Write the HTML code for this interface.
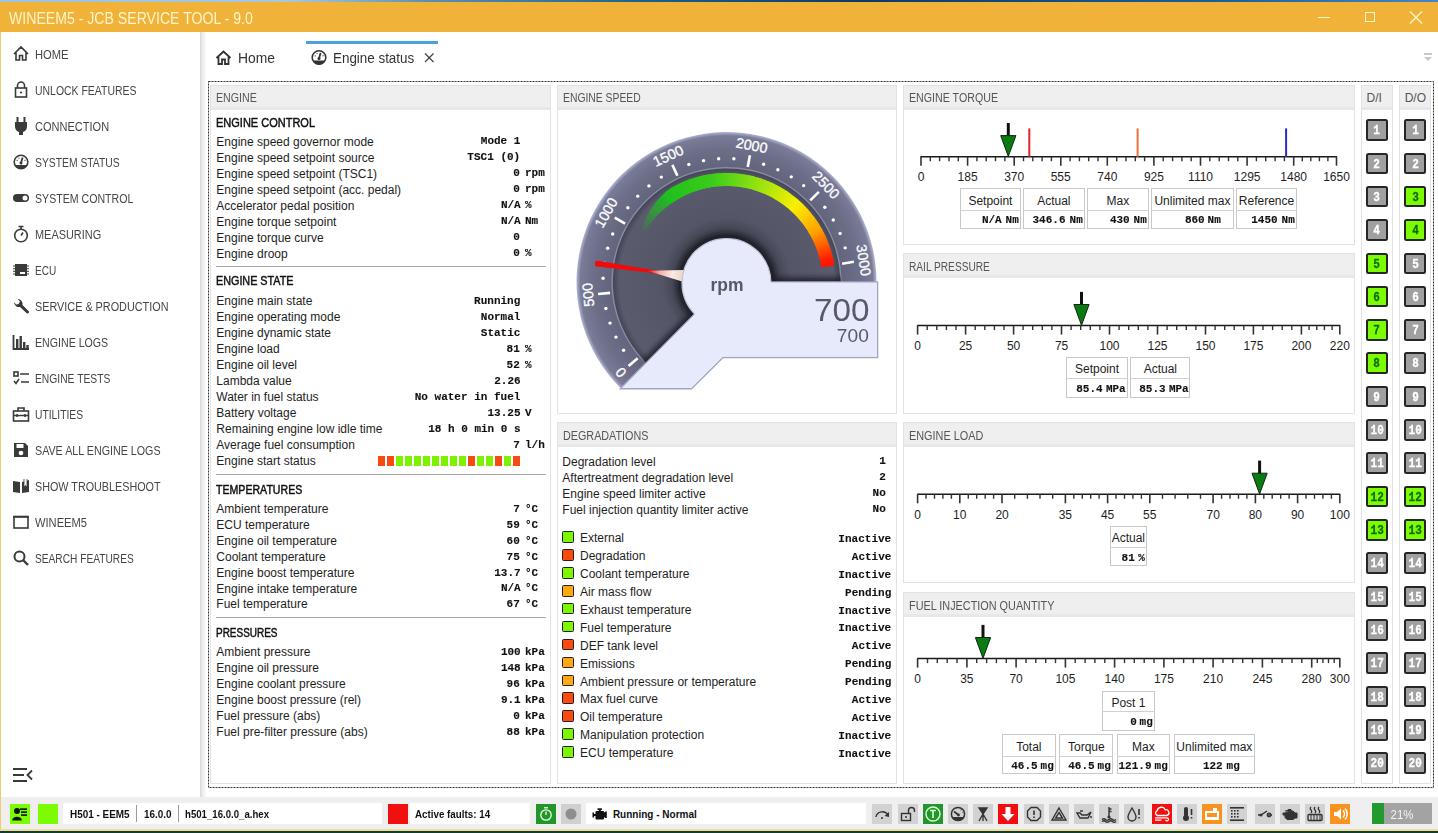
<!DOCTYPE html>
<html><head><meta charset="utf-8"><title>WINEEM5 - JCB SERVICE TOOL - 9.0</title>
<style>
html,body{margin:0;padding:0;}
body{width:1438px;height:833px;overflow:hidden;position:relative;background:#fff;font-family:"Liberation Sans",sans-serif;}
.r{position:absolute;}
.t,.m{position:absolute;white-space:pre;line-height:1;}
.t{font-family:"Liberation Sans",sans-serif;}
.m{font-family:"Liberation Mono",monospace;-webkit-text-stroke:0.12px currentColor;}
svg.ov{position:absolute;left:0;top:0;width:1438px;height:833px;}
</style></head><body>
<div class="r" style="left:0px;top:0px;width:1438px;height:2px;background:linear-gradient(90deg,#9cc3e0 0%,#a8c8dc 20%,#5b8fae 30%,#1f5f86 45%,#0d3b66 60%,#1d5f9a 85%,#4a84c6 100%)"></div>
<div class="r" style="left:0px;top:2px;width:1438px;height:30px;background:#f1b239"></div>
<div class="r" style="left:1318px;top:17px;width:12px;height:1px;background:#fff6d0"></div>
<div class="r" style="left:1365px;top:12px;width:10px;height:10px;border:1px solid #fff6d0;box-sizing:border-box"></div>
<div class="r" style="left:1px;top:32px;width:199px;height:765px;background:#fff"></div>
<div class="r" style="left:200px;top:32px;width:6px;height:765px;background:linear-gradient(90deg,#d6d6d6,#ececec 40%,#fafafa)"></div>
<div class="r" style="left:206px;top:32px;width:1232px;height:765px;background:#fff"></div>
<div class="r" style="left:306px;top:41px;width:132px;height:3px;background:#4aa3d8"></div>
<div class="r" style="left:1424px;top:53px;width:8px;height:2px;background:#c8c8c8"></div>
<div class="r" style="left:210px;top:85px;width:341px;height:699px;border:1px solid #e2e2e2;box-sizing:border-box;background:#fff"></div>
<div class="r" style="left:211px;top:86px;width:339px;height:24px;background:#efefef;border-bottom:3px solid #e8e8e8;box-sizing:border-box"></div>
<div class="r" style="left:557px;top:85px;width:340px;height:329px;border:1px solid #e2e2e2;box-sizing:border-box;background:#fff"></div>
<div class="r" style="left:558px;top:86px;width:338px;height:24px;background:#efefef;border-bottom:3px solid #e8e8e8;box-sizing:border-box"></div>
<div class="r" style="left:557px;top:422px;width:340px;height:362px;border:1px solid #e2e2e2;box-sizing:border-box;background:#fff"></div>
<div class="r" style="left:558px;top:423px;width:338px;height:24px;background:#efefef;border-bottom:3px solid #e8e8e8;box-sizing:border-box"></div>
<div class="r" style="left:903px;top:85px;width:452px;height:160px;border:1px solid #e2e2e2;box-sizing:border-box;background:#fff"></div>
<div class="r" style="left:904px;top:86px;width:450px;height:24px;background:#efefef;border-bottom:3px solid #e8e8e8;box-sizing:border-box"></div>
<div class="r" style="left:903px;top:253px;width:452px;height:161px;border:1px solid #e2e2e2;box-sizing:border-box;background:#fff"></div>
<div class="r" style="left:904px;top:254px;width:450px;height:24px;background:#efefef;border-bottom:3px solid #e8e8e8;box-sizing:border-box"></div>
<div class="r" style="left:903px;top:422px;width:452px;height:161px;border:1px solid #e2e2e2;box-sizing:border-box;background:#fff"></div>
<div class="r" style="left:904px;top:423px;width:450px;height:24px;background:#efefef;border-bottom:3px solid #e8e8e8;box-sizing:border-box"></div>
<div class="r" style="left:903px;top:592px;width:452px;height:192px;border:1px solid #e2e2e2;box-sizing:border-box;background:#fff"></div>
<div class="r" style="left:904px;top:593px;width:450px;height:24px;background:#efefef;border-bottom:3px solid #e8e8e8;box-sizing:border-box"></div>
<div class="r" style="left:1361px;top:85px;width:32px;height:699px;border:1px solid #e2e2e2;box-sizing:border-box;background:#fff"></div>
<div class="r" style="left:1362px;top:86px;width:30px;height:24px;background:#efefef;border-bottom:3px solid #e8e8e8;box-sizing:border-box"></div>
<div class="r" style="left:1399px;top:85px;width:32px;height:699px;border:1px solid #e2e2e2;box-sizing:border-box;background:#fff"></div>
<div class="r" style="left:1400px;top:86px;width:30px;height:24px;background:#efefef;border-bottom:3px solid #e8e8e8;box-sizing:border-box"></div>
<div class="r" style="left:216px;top:266px;width:330px;height:1px;background:#a8a8a8"></div>
<div class="r" style="left:378px;top:456px;width:7px;height:10px;background:#f54a12"></div>
<div class="r" style="left:387px;top:456px;width:7px;height:10px;background:#f54a12"></div>
<div class="r" style="left:396px;top:456px;width:7px;height:10px;background:#7cf200"></div>
<div class="r" style="left:405px;top:456px;width:7px;height:10px;background:#7cf200"></div>
<div class="r" style="left:414px;top:456px;width:7px;height:10px;background:#7cf200"></div>
<div class="r" style="left:423px;top:456px;width:7px;height:10px;background:#7cf200"></div>
<div class="r" style="left:432px;top:456px;width:7px;height:10px;background:#7cf200"></div>
<div class="r" style="left:441px;top:456px;width:7px;height:10px;background:#7cf200"></div>
<div class="r" style="left:450px;top:456px;width:7px;height:10px;background:#7cf200"></div>
<div class="r" style="left:459px;top:456px;width:7px;height:10px;background:#7cf200"></div>
<div class="r" style="left:468px;top:456px;width:7px;height:10px;background:#f54a12"></div>
<div class="r" style="left:477px;top:456px;width:7px;height:10px;background:#7cf200"></div>
<div class="r" style="left:486px;top:456px;width:7px;height:10px;background:#7cf200"></div>
<div class="r" style="left:495px;top:456px;width:7px;height:10px;background:#f54a12"></div>
<div class="r" style="left:504px;top:456px;width:7px;height:10px;background:#7cf200"></div>
<div class="r" style="left:513px;top:456px;width:7px;height:10px;background:#f54a12"></div>
<div class="r" style="left:216px;top:474px;width:330px;height:1px;background:#a8a8a8"></div>
<div class="r" style="left:216px;top:617px;width:330px;height:1px;background:#a8a8a8"></div>
<div class="r" style="left:562px;top:531.3000000000001px;width:12px;height:11.5px;background:#7cf700;border:1.5px solid #1e1e1e;border-radius:1.5px;box-sizing:border-box"></div>
<div class="r" style="left:562px;top:549.2px;width:12px;height:11.5px;background:#fb4a10;border:1.5px solid #1e1e1e;border-radius:1.5px;box-sizing:border-box"></div>
<div class="r" style="left:562px;top:567.1px;width:12px;height:11.5px;background:#7cf700;border:1.5px solid #1e1e1e;border-radius:1.5px;box-sizing:border-box"></div>
<div class="r" style="left:562px;top:585.0000000000001px;width:12px;height:11.5px;background:#ffa812;border:1.5px solid #1e1e1e;border-radius:1.5px;box-sizing:border-box"></div>
<div class="r" style="left:562px;top:602.9000000000001px;width:12px;height:11.5px;background:#7cf700;border:1.5px solid #1e1e1e;border-radius:1.5px;box-sizing:border-box"></div>
<div class="r" style="left:562px;top:620.8000000000001px;width:12px;height:11.5px;background:#7cf700;border:1.5px solid #1e1e1e;border-radius:1.5px;box-sizing:border-box"></div>
<div class="r" style="left:562px;top:638.7px;width:12px;height:11.5px;background:#fb4a10;border:1.5px solid #1e1e1e;border-radius:1.5px;box-sizing:border-box"></div>
<div class="r" style="left:562px;top:656.6px;width:12px;height:11.5px;background:#ffa812;border:1.5px solid #1e1e1e;border-radius:1.5px;box-sizing:border-box"></div>
<div class="r" style="left:562px;top:674.5000000000001px;width:12px;height:11.5px;background:#ffa812;border:1.5px solid #1e1e1e;border-radius:1.5px;box-sizing:border-box"></div>
<div class="r" style="left:562px;top:692.4000000000001px;width:12px;height:11.5px;background:#fb4a10;border:1.5px solid #1e1e1e;border-radius:1.5px;box-sizing:border-box"></div>
<div class="r" style="left:562px;top:710.3000000000001px;width:12px;height:11.5px;background:#fb4a10;border:1.5px solid #1e1e1e;border-radius:1.5px;box-sizing:border-box"></div>
<div class="r" style="left:562px;top:728.2px;width:12px;height:11.5px;background:#7cf700;border:1.5px solid #1e1e1e;border-radius:1.5px;box-sizing:border-box"></div>
<div class="r" style="left:562px;top:746.1px;width:12px;height:11.5px;background:#7cf700;border:1.5px solid #1e1e1e;border-radius:1.5px;box-sizing:border-box"></div>
<div class="r" style="left:960.2px;top:188.4px;width:60.39999999999998px;height:40.29999999999998px;border:1px solid #c9c9c9;box-sizing:border-box;background:#fff"></div>
<div class="r" style="left:960.2px;top:209.5px;width:60.39999999999998px;height:1px;background:#d0d0d0"></div>
<div class="r" style="left:1023.2px;top:188.4px;width:61.399999999999864px;height:40.29999999999998px;border:1px solid #c9c9c9;box-sizing:border-box;background:#fff"></div>
<div class="r" style="left:1023.2px;top:209.5px;width:61.399999999999864px;height:1px;background:#d0d0d0"></div>
<div class="r" style="left:1087.1px;top:188.4px;width:61.5px;height:40.29999999999998px;border:1px solid #c9c9c9;box-sizing:border-box;background:#fff"></div>
<div class="r" style="left:1087.1px;top:209.5px;width:61.5px;height:1px;background:#d0d0d0"></div>
<div class="r" style="left:1151.1px;top:188.4px;width:82.60000000000014px;height:40.29999999999998px;border:1px solid #c9c9c9;box-sizing:border-box;background:#fff"></div>
<div class="r" style="left:1151.1px;top:209.5px;width:82.60000000000014px;height:1px;background:#d0d0d0"></div>
<div class="r" style="left:1236.2px;top:188.4px;width:60.5px;height:40.29999999999998px;border:1px solid #c9c9c9;box-sizing:border-box;background:#fff"></div>
<div class="r" style="left:1236.2px;top:209.5px;width:60.5px;height:1px;background:#d0d0d0"></div>
<div class="r" style="left:1066.3px;top:357px;width:61.5px;height:40.60000000000002px;border:1px solid #c9c9c9;box-sizing:border-box;background:#fff"></div>
<div class="r" style="left:1066.3px;top:378px;width:61.5px;height:1px;background:#d0d0d0"></div>
<div class="r" style="left:1130.3px;top:357px;width:60.200000000000045px;height:40.60000000000002px;border:1px solid #c9c9c9;box-sizing:border-box;background:#fff"></div>
<div class="r" style="left:1130.3px;top:378px;width:60.200000000000045px;height:1px;background:#d0d0d0"></div>
<div class="r" style="left:1109.5px;top:526.3px;width:37.799999999999955px;height:40.0px;border:1px solid #c9c9c9;box-sizing:border-box;background:#fff"></div>
<div class="r" style="left:1109.5px;top:547px;width:37.799999999999955px;height:1px;background:#d0d0d0"></div>
<div class="r" style="left:1101.5px;top:690.6px;width:53.799999999999955px;height:40.0px;border:1px solid #c9c9c9;box-sizing:border-box;background:#fff"></div>
<div class="r" style="left:1101.5px;top:711.4px;width:53.799999999999955px;height:1px;background:#d0d0d0"></div>
<div class="r" style="left:1001.7px;top:734.4px;width:54.399999999999864px;height:40.0px;border:1px solid #c9c9c9;box-sizing:border-box;background:#fff"></div>
<div class="r" style="left:1001.7px;top:755.5px;width:54.399999999999864px;height:1px;background:#d0d0d0"></div>
<div class="r" style="left:1059.3px;top:734.4px;width:54.100000000000136px;height:40.0px;border:1px solid #c9c9c9;box-sizing:border-box;background:#fff"></div>
<div class="r" style="left:1059.3px;top:755.5px;width:54.100000000000136px;height:1px;background:#d0d0d0"></div>
<div class="r" style="left:1116.6px;top:734.4px;width:53.700000000000045px;height:40.0px;border:1px solid #c9c9c9;box-sizing:border-box;background:#fff"></div>
<div class="r" style="left:1116.6px;top:755.5px;width:53.700000000000045px;height:1px;background:#d0d0d0"></div>
<div class="r" style="left:1173.5px;top:734.4px;width:81.59999999999991px;height:40.0px;border:1px solid #c9c9c9;box-sizing:border-box;background:#fff"></div>
<div class="r" style="left:1173.5px;top:755.5px;width:81.59999999999991px;height:1px;background:#d0d0d0"></div>
<div class="r" style="left:1366px;top:119.2px;width:22px;height:21.6px;background:#a0a0a0;border:2px solid #262626;border-radius:2.5px;box-sizing:border-box"></div>
<div class="r" style="left:1366px;top:152.5px;width:22px;height:21.6px;background:#a0a0a0;border:2px solid #262626;border-radius:2.5px;box-sizing:border-box"></div>
<div class="r" style="left:1366px;top:185.8px;width:22px;height:21.6px;background:#a0a0a0;border:2px solid #262626;border-radius:2.5px;box-sizing:border-box"></div>
<div class="r" style="left:1366px;top:219.2px;width:22px;height:21.6px;background:#a0a0a0;border:2px solid #262626;border-radius:2.5px;box-sizing:border-box"></div>
<div class="r" style="left:1366px;top:252.5px;width:22px;height:21.6px;background:#7cfc00;border:2px solid #262626;border-radius:2.5px;box-sizing:border-box"></div>
<div class="r" style="left:1366px;top:285.8px;width:22px;height:21.6px;background:#7cfc00;border:2px solid #262626;border-radius:2.5px;box-sizing:border-box"></div>
<div class="r" style="left:1366px;top:319.1px;width:22px;height:21.6px;background:#7cfc00;border:2px solid #262626;border-radius:2.5px;box-sizing:border-box"></div>
<div class="r" style="left:1366px;top:352.4px;width:22px;height:21.6px;background:#7cfc00;border:2px solid #262626;border-radius:2.5px;box-sizing:border-box"></div>
<div class="r" style="left:1366px;top:385.8px;width:22px;height:21.6px;background:#a0a0a0;border:2px solid #262626;border-radius:2.5px;box-sizing:border-box"></div>
<div class="r" style="left:1366px;top:419.1px;width:22px;height:21.6px;background:#a0a0a0;border:2px solid #262626;border-radius:2.5px;box-sizing:border-box"></div>
<div class="r" style="left:1366px;top:452.4px;width:22px;height:21.6px;background:#a0a0a0;border:2px solid #262626;border-radius:2.5px;box-sizing:border-box"></div>
<div class="r" style="left:1366px;top:485.7px;width:22px;height:21.6px;background:#7cfc00;border:2px solid #262626;border-radius:2.5px;box-sizing:border-box"></div>
<div class="r" style="left:1366px;top:519.0px;width:22px;height:21.6px;background:#7cfc00;border:2px solid #262626;border-radius:2.5px;box-sizing:border-box"></div>
<div class="r" style="left:1366px;top:552.4px;width:22px;height:21.6px;background:#a0a0a0;border:2px solid #262626;border-radius:2.5px;box-sizing:border-box"></div>
<div class="r" style="left:1366px;top:585.7px;width:22px;height:21.6px;background:#a0a0a0;border:2px solid #262626;border-radius:2.5px;box-sizing:border-box"></div>
<div class="r" style="left:1366px;top:619.0px;width:22px;height:21.6px;background:#a0a0a0;border:2px solid #262626;border-radius:2.5px;box-sizing:border-box"></div>
<div class="r" style="left:1366px;top:652.3px;width:22px;height:21.6px;background:#a0a0a0;border:2px solid #262626;border-radius:2.5px;box-sizing:border-box"></div>
<div class="r" style="left:1366px;top:685.6px;width:22px;height:21.6px;background:#a0a0a0;border:2px solid #262626;border-radius:2.5px;box-sizing:border-box"></div>
<div class="r" style="left:1366px;top:719.0px;width:22px;height:21.6px;background:#a0a0a0;border:2px solid #262626;border-radius:2.5px;box-sizing:border-box"></div>
<div class="r" style="left:1366px;top:752.3px;width:22px;height:21.6px;background:#a0a0a0;border:2px solid #262626;border-radius:2.5px;box-sizing:border-box"></div>
<div class="r" style="left:1404.3px;top:119.2px;width:22px;height:21.6px;background:#a0a0a0;border:2px solid #262626;border-radius:2.5px;box-sizing:border-box"></div>
<div class="r" style="left:1404.3px;top:152.5px;width:22px;height:21.6px;background:#a0a0a0;border:2px solid #262626;border-radius:2.5px;box-sizing:border-box"></div>
<div class="r" style="left:1404.3px;top:185.8px;width:22px;height:21.6px;background:#7cfc00;border:2px solid #262626;border-radius:2.5px;box-sizing:border-box"></div>
<div class="r" style="left:1404.3px;top:219.2px;width:22px;height:21.6px;background:#7cfc00;border:2px solid #262626;border-radius:2.5px;box-sizing:border-box"></div>
<div class="r" style="left:1404.3px;top:252.5px;width:22px;height:21.6px;background:#a0a0a0;border:2px solid #262626;border-radius:2.5px;box-sizing:border-box"></div>
<div class="r" style="left:1404.3px;top:285.8px;width:22px;height:21.6px;background:#a0a0a0;border:2px solid #262626;border-radius:2.5px;box-sizing:border-box"></div>
<div class="r" style="left:1404.3px;top:319.1px;width:22px;height:21.6px;background:#a0a0a0;border:2px solid #262626;border-radius:2.5px;box-sizing:border-box"></div>
<div class="r" style="left:1404.3px;top:352.4px;width:22px;height:21.6px;background:#a0a0a0;border:2px solid #262626;border-radius:2.5px;box-sizing:border-box"></div>
<div class="r" style="left:1404.3px;top:385.8px;width:22px;height:21.6px;background:#a0a0a0;border:2px solid #262626;border-radius:2.5px;box-sizing:border-box"></div>
<div class="r" style="left:1404.3px;top:419.1px;width:22px;height:21.6px;background:#a0a0a0;border:2px solid #262626;border-radius:2.5px;box-sizing:border-box"></div>
<div class="r" style="left:1404.3px;top:452.4px;width:22px;height:21.6px;background:#a0a0a0;border:2px solid #262626;border-radius:2.5px;box-sizing:border-box"></div>
<div class="r" style="left:1404.3px;top:485.7px;width:22px;height:21.6px;background:#7cfc00;border:2px solid #262626;border-radius:2.5px;box-sizing:border-box"></div>
<div class="r" style="left:1404.3px;top:519.0px;width:22px;height:21.6px;background:#7cfc00;border:2px solid #262626;border-radius:2.5px;box-sizing:border-box"></div>
<div class="r" style="left:1404.3px;top:552.4px;width:22px;height:21.6px;background:#a0a0a0;border:2px solid #262626;border-radius:2.5px;box-sizing:border-box"></div>
<div class="r" style="left:1404.3px;top:585.7px;width:22px;height:21.6px;background:#a0a0a0;border:2px solid #262626;border-radius:2.5px;box-sizing:border-box"></div>
<div class="r" style="left:1404.3px;top:619.0px;width:22px;height:21.6px;background:#a0a0a0;border:2px solid #262626;border-radius:2.5px;box-sizing:border-box"></div>
<div class="r" style="left:1404.3px;top:652.3px;width:22px;height:21.6px;background:#a0a0a0;border:2px solid #262626;border-radius:2.5px;box-sizing:border-box"></div>
<div class="r" style="left:1404.3px;top:685.6px;width:22px;height:21.6px;background:#a0a0a0;border:2px solid #262626;border-radius:2.5px;box-sizing:border-box"></div>
<div class="r" style="left:1404.3px;top:719.0px;width:22px;height:21.6px;background:#a0a0a0;border:2px solid #262626;border-radius:2.5px;box-sizing:border-box"></div>
<div class="r" style="left:1404.3px;top:752.3px;width:22px;height:21.6px;background:#a0a0a0;border:2px solid #262626;border-radius:2.5px;box-sizing:border-box"></div>
<div class="r" style="left:1px;top:797px;width:1437px;height:32px;background:#efefef"></div>
<div class="r" style="left:10px;top:804px;width:20px;height:20px;background:#7cfc00"></div>
<div class="r" style="left:38px;top:804px;width:20px;height:20px;background:#7cfc00"></div>
<div class="r" style="left:63px;top:803px;width:319px;height:21px;background:#fff"></div>
<div class="r" style="left:136px;top:805px;width:1px;height:17px;background:#9a9a9a"></div>
<div class="r" style="left:178px;top:805px;width:1px;height:17px;background:#9a9a9a"></div>
<div class="r" style="left:388px;top:804px;width:20px;height:20px;background:#f01010"></div>
<div class="r" style="left:410px;top:803px;width:120px;height:21px;background:#fff"></div>
<div class="r" style="left:536px;top:804px;width:20px;height:20px;background:#22962a"></div>
<div class="r" style="left:561px;top:804px;width:20px;height:20px;background:#d0d0d0"></div>
<div class="r" style="left:586px;top:803px;width:280px;height:21px;background:#fff"></div>
<div class="r" style="left:872px;top:804px;width:20px;height:20px;background:#d2d2d2"></div>
<div class="r" style="left:898px;top:804px;width:20px;height:20px;background:#d2d2d2"></div>
<div class="r" style="left:923px;top:804px;width:20px;height:20px;background:#22962a"></div>
<div class="r" style="left:948px;top:804px;width:20px;height:20px;background:#d2d2d2"></div>
<div class="r" style="left:973px;top:804px;width:20px;height:20px;background:#d2d2d2"></div>
<div class="r" style="left:998px;top:804px;width:20px;height:20px;background:#f20f0f"></div>
<div class="r" style="left:1024px;top:804px;width:20px;height:20px;background:#d2d2d2"></div>
<div class="r" style="left:1049px;top:804px;width:20px;height:20px;background:#d2d2d2"></div>
<div class="r" style="left:1074px;top:804px;width:20px;height:20px;background:#d2d2d2"></div>
<div class="r" style="left:1099px;top:804px;width:20px;height:20px;background:#d2d2d2"></div>
<div class="r" style="left:1124px;top:804px;width:20px;height:20px;background:#d2d2d2"></div>
<div class="r" style="left:1152px;top:804px;width:20px;height:20px;background:#f20f0f"></div>
<div class="r" style="left:1177px;top:804px;width:20px;height:20px;background:#d2d2d2"></div>
<div class="r" style="left:1202px;top:804px;width:20px;height:20px;background:#f7931e"></div>
<div class="r" style="left:1227px;top:804px;width:20px;height:20px;background:#d2d2d2"></div>
<div class="r" style="left:1255px;top:804px;width:20px;height:20px;background:#d2d2d2"></div>
<div class="r" style="left:1280px;top:804px;width:20px;height:20px;background:#d2d2d2"></div>
<div class="r" style="left:1305px;top:804px;width:20px;height:20px;background:#d2d2d2"></div>
<div class="r" style="left:1330px;top:804px;width:20px;height:20px;background:#f7931e"></div>
<div class="r" style="left:0px;top:32px;width:1px;height:798px;background:#eccb74"></div>
<div class="r" style="left:0px;top:829px;width:1438px;height:2px;background:#f3dc9a"></div>
<div class="r" style="left:0px;top:831px;width:1438px;height:2px;background:#0f3d2e"></div>
<div class="r" style="left:1372px;top:803px;width:60px;height:21px;background:#a3a3a3"></div>
<div class="r" style="left:1372px;top:803px;width:12px;height:21px;background:#239a2d"></div>
<svg class="ov" width="1438" height="833" viewBox="0 0 1438 833">
<g stroke="#fff6d0" stroke-width="1.2"><line x1="1410" y1="11.5" x2="1422" y2="23.5"/><line x1="1422" y1="11.5" x2="1410" y2="23.5"/></g>
<g stroke="#444" stroke-width="1.3"><line x1="425" y1="53.5" x2="433.5" y2="62"/><line x1="433.5" y1="53.5" x2="425" y2="62"/></g>
<polygon points="1424,57 1432,57 1428,61" fill="#c8c8c8"/>
<rect x="208.5" y="81.5" width="1225" height="706" fill="none" stroke="#333" stroke-width="1" stroke-dasharray="2 1"/>
<line x1="920.5" y1="156.7" x2="1337.0" y2="156.7" stroke="#1a1a1a" stroke-width="1.5"/>
<line x1="921.0" y1="156.7" x2="921.0" y2="165.7" stroke="#333" stroke-width="1.6"/>
<line x1="930.3" y1="156.7" x2="930.3" y2="161.2" stroke="#333" stroke-width="1.4"/>
<line x1="939.6" y1="156.7" x2="939.6" y2="161.2" stroke="#333" stroke-width="1.4"/>
<line x1="949.0" y1="156.7" x2="949.0" y2="161.2" stroke="#333" stroke-width="1.4"/>
<line x1="958.3" y1="156.7" x2="958.3" y2="161.2" stroke="#333" stroke-width="1.4"/>
<line x1="967.6" y1="156.7" x2="967.6" y2="165.7" stroke="#333" stroke-width="1.6"/>
<line x1="976.9" y1="156.7" x2="976.9" y2="161.2" stroke="#333" stroke-width="1.4"/>
<line x1="986.2" y1="156.7" x2="986.2" y2="161.2" stroke="#333" stroke-width="1.4"/>
<line x1="995.5" y1="156.7" x2="995.5" y2="161.2" stroke="#333" stroke-width="1.4"/>
<line x1="1004.9" y1="156.7" x2="1004.9" y2="161.2" stroke="#333" stroke-width="1.4"/>
<line x1="1014.2" y1="156.7" x2="1014.2" y2="165.7" stroke="#333" stroke-width="1.6"/>
<line x1="1023.5" y1="156.7" x2="1023.5" y2="161.2" stroke="#333" stroke-width="1.4"/>
<line x1="1032.8" y1="156.7" x2="1032.8" y2="161.2" stroke="#333" stroke-width="1.4"/>
<line x1="1042.1" y1="156.7" x2="1042.1" y2="161.2" stroke="#333" stroke-width="1.4"/>
<line x1="1051.4" y1="156.7" x2="1051.4" y2="161.2" stroke="#333" stroke-width="1.4"/>
<line x1="1060.8" y1="156.7" x2="1060.8" y2="165.7" stroke="#333" stroke-width="1.6"/>
<line x1="1070.1" y1="156.7" x2="1070.1" y2="161.2" stroke="#333" stroke-width="1.4"/>
<line x1="1079.4" y1="156.7" x2="1079.4" y2="161.2" stroke="#333" stroke-width="1.4"/>
<line x1="1088.7" y1="156.7" x2="1088.7" y2="161.2" stroke="#333" stroke-width="1.4"/>
<line x1="1098.0" y1="156.7" x2="1098.0" y2="161.2" stroke="#333" stroke-width="1.4"/>
<line x1="1107.3" y1="156.7" x2="1107.3" y2="165.7" stroke="#333" stroke-width="1.6"/>
<line x1="1116.7" y1="156.7" x2="1116.7" y2="161.2" stroke="#333" stroke-width="1.4"/>
<line x1="1126.0" y1="156.7" x2="1126.0" y2="161.2" stroke="#333" stroke-width="1.4"/>
<line x1="1135.3" y1="156.7" x2="1135.3" y2="161.2" stroke="#333" stroke-width="1.4"/>
<line x1="1144.6" y1="156.7" x2="1144.6" y2="161.2" stroke="#333" stroke-width="1.4"/>
<line x1="1153.9" y1="156.7" x2="1153.9" y2="165.7" stroke="#333" stroke-width="1.6"/>
<line x1="1163.2" y1="156.7" x2="1163.2" y2="161.2" stroke="#333" stroke-width="1.4"/>
<line x1="1172.6" y1="156.7" x2="1172.6" y2="161.2" stroke="#333" stroke-width="1.4"/>
<line x1="1181.9" y1="156.7" x2="1181.9" y2="161.2" stroke="#333" stroke-width="1.4"/>
<line x1="1191.2" y1="156.7" x2="1191.2" y2="161.2" stroke="#333" stroke-width="1.4"/>
<line x1="1200.5" y1="156.7" x2="1200.5" y2="165.7" stroke="#333" stroke-width="1.6"/>
<line x1="1209.8" y1="156.7" x2="1209.8" y2="161.2" stroke="#333" stroke-width="1.4"/>
<line x1="1219.2" y1="156.7" x2="1219.2" y2="161.2" stroke="#333" stroke-width="1.4"/>
<line x1="1228.5" y1="156.7" x2="1228.5" y2="161.2" stroke="#333" stroke-width="1.4"/>
<line x1="1237.8" y1="156.7" x2="1237.8" y2="161.2" stroke="#333" stroke-width="1.4"/>
<line x1="1247.1" y1="156.7" x2="1247.1" y2="165.7" stroke="#333" stroke-width="1.6"/>
<line x1="1256.4" y1="156.7" x2="1256.4" y2="161.2" stroke="#333" stroke-width="1.4"/>
<line x1="1265.7" y1="156.7" x2="1265.7" y2="161.2" stroke="#333" stroke-width="1.4"/>
<line x1="1275.1" y1="156.7" x2="1275.1" y2="161.2" stroke="#333" stroke-width="1.4"/>
<line x1="1284.4" y1="156.7" x2="1284.4" y2="161.2" stroke="#333" stroke-width="1.4"/>
<line x1="1293.7" y1="156.7" x2="1293.7" y2="165.7" stroke="#333" stroke-width="1.6"/>
<line x1="1302.3" y1="156.7" x2="1302.3" y2="161.2" stroke="#333" stroke-width="1.4"/>
<line x1="1310.8" y1="156.7" x2="1310.8" y2="161.2" stroke="#333" stroke-width="1.4"/>
<line x1="1319.4" y1="156.7" x2="1319.4" y2="161.2" stroke="#333" stroke-width="1.4"/>
<line x1="1327.9" y1="156.7" x2="1327.9" y2="161.2" stroke="#333" stroke-width="1.4"/>
<line x1="1336.5" y1="156.7" x2="1336.5" y2="165.7" stroke="#333" stroke-width="1.6"/>
<line x1="1029.3" y1="128.39999999999998" x2="1029.3" y2="156.7" stroke="#e0262b" stroke-width="2"/>
<line x1="1137.6" y1="128.39999999999998" x2="1137.6" y2="156.7" stroke="#e8703a" stroke-width="2"/>
<line x1="1286.1" y1="128.39999999999998" x2="1286.1" y2="156.7" stroke="#2a2ad0" stroke-width="2"/>
<line x1="1008.3" y1="122.99999999999999" x2="1008.3" y2="136.7" stroke="#111" stroke-width="3"/>
<polygon points="1000.7,135.6 1015.9,135.6 1008.3,156.39999999999998" fill="#0b7a12" stroke="#0a2a0a" stroke-width="1"/>
<line x1="917.1" y1="325.6" x2="1340.3" y2="325.6" stroke="#1a1a1a" stroke-width="1.5"/>
<line x1="917.6" y1="325.6" x2="917.6" y2="334.6" stroke="#333" stroke-width="1.6"/>
<line x1="927.2" y1="325.6" x2="927.2" y2="330.1" stroke="#333" stroke-width="1.4"/>
<line x1="936.8" y1="325.6" x2="936.8" y2="330.1" stroke="#333" stroke-width="1.4"/>
<line x1="946.4" y1="325.6" x2="946.4" y2="330.1" stroke="#333" stroke-width="1.4"/>
<line x1="956.0" y1="325.6" x2="956.0" y2="330.1" stroke="#333" stroke-width="1.4"/>
<line x1="965.6" y1="325.6" x2="965.6" y2="334.6" stroke="#333" stroke-width="1.6"/>
<line x1="975.2" y1="325.6" x2="975.2" y2="330.1" stroke="#333" stroke-width="1.4"/>
<line x1="984.8" y1="325.6" x2="984.8" y2="330.1" stroke="#333" stroke-width="1.4"/>
<line x1="994.4" y1="325.6" x2="994.4" y2="330.1" stroke="#333" stroke-width="1.4"/>
<line x1="1004.0" y1="325.6" x2="1004.0" y2="330.1" stroke="#333" stroke-width="1.4"/>
<line x1="1013.6" y1="325.6" x2="1013.6" y2="334.6" stroke="#333" stroke-width="1.6"/>
<line x1="1023.1" y1="325.6" x2="1023.1" y2="330.1" stroke="#333" stroke-width="1.4"/>
<line x1="1032.7" y1="325.6" x2="1032.7" y2="330.1" stroke="#333" stroke-width="1.4"/>
<line x1="1042.3" y1="325.6" x2="1042.3" y2="330.1" stroke="#333" stroke-width="1.4"/>
<line x1="1051.9" y1="325.6" x2="1051.9" y2="330.1" stroke="#333" stroke-width="1.4"/>
<line x1="1061.5" y1="325.6" x2="1061.5" y2="334.6" stroke="#333" stroke-width="1.6"/>
<line x1="1071.1" y1="325.6" x2="1071.1" y2="330.1" stroke="#333" stroke-width="1.4"/>
<line x1="1080.7" y1="325.6" x2="1080.7" y2="330.1" stroke="#333" stroke-width="1.4"/>
<line x1="1090.3" y1="325.6" x2="1090.3" y2="330.1" stroke="#333" stroke-width="1.4"/>
<line x1="1099.9" y1="325.6" x2="1099.9" y2="330.1" stroke="#333" stroke-width="1.4"/>
<line x1="1109.5" y1="325.6" x2="1109.5" y2="334.6" stroke="#333" stroke-width="1.6"/>
<line x1="1119.1" y1="325.6" x2="1119.1" y2="330.1" stroke="#333" stroke-width="1.4"/>
<line x1="1128.7" y1="325.6" x2="1128.7" y2="330.1" stroke="#333" stroke-width="1.4"/>
<line x1="1138.3" y1="325.6" x2="1138.3" y2="330.1" stroke="#333" stroke-width="1.4"/>
<line x1="1147.9" y1="325.6" x2="1147.9" y2="330.1" stroke="#333" stroke-width="1.4"/>
<line x1="1157.5" y1="325.6" x2="1157.5" y2="334.6" stroke="#333" stroke-width="1.6"/>
<line x1="1167.1" y1="325.6" x2="1167.1" y2="330.1" stroke="#333" stroke-width="1.4"/>
<line x1="1176.7" y1="325.6" x2="1176.7" y2="330.1" stroke="#333" stroke-width="1.4"/>
<line x1="1186.3" y1="325.6" x2="1186.3" y2="330.1" stroke="#333" stroke-width="1.4"/>
<line x1="1195.9" y1="325.6" x2="1195.9" y2="330.1" stroke="#333" stroke-width="1.4"/>
<line x1="1205.5" y1="325.6" x2="1205.5" y2="334.6" stroke="#333" stroke-width="1.6"/>
<line x1="1215.1" y1="325.6" x2="1215.1" y2="330.1" stroke="#333" stroke-width="1.4"/>
<line x1="1224.7" y1="325.6" x2="1224.7" y2="330.1" stroke="#333" stroke-width="1.4"/>
<line x1="1234.2" y1="325.6" x2="1234.2" y2="330.1" stroke="#333" stroke-width="1.4"/>
<line x1="1243.8" y1="325.6" x2="1243.8" y2="330.1" stroke="#333" stroke-width="1.4"/>
<line x1="1253.4" y1="325.6" x2="1253.4" y2="334.6" stroke="#333" stroke-width="1.6"/>
<line x1="1263.0" y1="325.6" x2="1263.0" y2="330.1" stroke="#333" stroke-width="1.4"/>
<line x1="1272.6" y1="325.6" x2="1272.6" y2="330.1" stroke="#333" stroke-width="1.4"/>
<line x1="1282.2" y1="325.6" x2="1282.2" y2="330.1" stroke="#333" stroke-width="1.4"/>
<line x1="1291.8" y1="325.6" x2="1291.8" y2="330.1" stroke="#333" stroke-width="1.4"/>
<line x1="1301.4" y1="325.6" x2="1301.4" y2="334.6" stroke="#333" stroke-width="1.6"/>
<line x1="1309.1" y1="325.6" x2="1309.1" y2="330.1" stroke="#333" stroke-width="1.4"/>
<line x1="1316.8" y1="325.6" x2="1316.8" y2="330.1" stroke="#333" stroke-width="1.4"/>
<line x1="1324.4" y1="325.6" x2="1324.4" y2="330.1" stroke="#333" stroke-width="1.4"/>
<line x1="1332.1" y1="325.6" x2="1332.1" y2="330.1" stroke="#333" stroke-width="1.4"/>
<line x1="1339.8" y1="325.6" x2="1339.8" y2="334.6" stroke="#333" stroke-width="1.6"/>
<line x1="1081.5" y1="291.90000000000003" x2="1081.5" y2="305.6" stroke="#111" stroke-width="3"/>
<polygon points="1073.9,304.5 1089.1,304.5 1081.5,325.3" fill="#0b7a12" stroke="#0a2a0a" stroke-width="1"/>
<line x1="917.1" y1="494.3" x2="1340.3" y2="494.3" stroke="#1a1a1a" stroke-width="1.5"/>
<line x1="917.6" y1="494.3" x2="917.6" y2="503.3" stroke="#333" stroke-width="1.6"/>
<line x1="926.0" y1="494.3" x2="926.0" y2="498.8" stroke="#333" stroke-width="1.4"/>
<line x1="934.5" y1="494.3" x2="934.5" y2="498.8" stroke="#333" stroke-width="1.4"/>
<line x1="942.9" y1="494.3" x2="942.9" y2="498.8" stroke="#333" stroke-width="1.4"/>
<line x1="951.4" y1="494.3" x2="951.4" y2="498.8" stroke="#333" stroke-width="1.4"/>
<line x1="959.8" y1="494.3" x2="959.8" y2="503.3" stroke="#333" stroke-width="1.6"/>
<line x1="968.3" y1="494.3" x2="968.3" y2="498.8" stroke="#333" stroke-width="1.4"/>
<line x1="976.7" y1="494.3" x2="976.7" y2="498.8" stroke="#333" stroke-width="1.4"/>
<line x1="985.2" y1="494.3" x2="985.2" y2="498.8" stroke="#333" stroke-width="1.4"/>
<line x1="993.6" y1="494.3" x2="993.6" y2="498.8" stroke="#333" stroke-width="1.4"/>
<line x1="1002.0" y1="494.3" x2="1002.0" y2="503.3" stroke="#333" stroke-width="1.6"/>
<line x1="1014.7" y1="494.3" x2="1014.7" y2="498.8" stroke="#333" stroke-width="1.4"/>
<line x1="1027.4" y1="494.3" x2="1027.4" y2="498.8" stroke="#333" stroke-width="1.4"/>
<line x1="1040.0" y1="494.3" x2="1040.0" y2="498.8" stroke="#333" stroke-width="1.4"/>
<line x1="1052.7" y1="494.3" x2="1052.7" y2="498.8" stroke="#333" stroke-width="1.4"/>
<line x1="1065.4" y1="494.3" x2="1065.4" y2="503.3" stroke="#333" stroke-width="1.6"/>
<line x1="1073.8" y1="494.3" x2="1073.8" y2="498.8" stroke="#333" stroke-width="1.4"/>
<line x1="1082.3" y1="494.3" x2="1082.3" y2="498.8" stroke="#333" stroke-width="1.4"/>
<line x1="1090.7" y1="494.3" x2="1090.7" y2="498.8" stroke="#333" stroke-width="1.4"/>
<line x1="1099.1" y1="494.3" x2="1099.1" y2="498.8" stroke="#333" stroke-width="1.4"/>
<line x1="1107.6" y1="494.3" x2="1107.6" y2="503.3" stroke="#333" stroke-width="1.6"/>
<line x1="1116.0" y1="494.3" x2="1116.0" y2="498.8" stroke="#333" stroke-width="1.4"/>
<line x1="1124.5" y1="494.3" x2="1124.5" y2="498.8" stroke="#333" stroke-width="1.4"/>
<line x1="1132.9" y1="494.3" x2="1132.9" y2="498.8" stroke="#333" stroke-width="1.4"/>
<line x1="1141.4" y1="494.3" x2="1141.4" y2="498.8" stroke="#333" stroke-width="1.4"/>
<line x1="1149.8" y1="494.3" x2="1149.8" y2="503.3" stroke="#333" stroke-width="1.6"/>
<line x1="1162.5" y1="494.3" x2="1162.5" y2="498.8" stroke="#333" stroke-width="1.4"/>
<line x1="1175.1" y1="494.3" x2="1175.1" y2="498.8" stroke="#333" stroke-width="1.4"/>
<line x1="1187.8" y1="494.3" x2="1187.8" y2="498.8" stroke="#333" stroke-width="1.4"/>
<line x1="1200.5" y1="494.3" x2="1200.5" y2="498.8" stroke="#333" stroke-width="1.4"/>
<line x1="1213.1" y1="494.3" x2="1213.1" y2="503.3" stroke="#333" stroke-width="1.6"/>
<line x1="1221.6" y1="494.3" x2="1221.6" y2="498.8" stroke="#333" stroke-width="1.4"/>
<line x1="1230.0" y1="494.3" x2="1230.0" y2="498.8" stroke="#333" stroke-width="1.4"/>
<line x1="1238.5" y1="494.3" x2="1238.5" y2="498.8" stroke="#333" stroke-width="1.4"/>
<line x1="1246.9" y1="494.3" x2="1246.9" y2="498.8" stroke="#333" stroke-width="1.4"/>
<line x1="1255.4" y1="494.3" x2="1255.4" y2="503.3" stroke="#333" stroke-width="1.6"/>
<line x1="1263.8" y1="494.3" x2="1263.8" y2="498.8" stroke="#333" stroke-width="1.4"/>
<line x1="1272.2" y1="494.3" x2="1272.2" y2="498.8" stroke="#333" stroke-width="1.4"/>
<line x1="1280.7" y1="494.3" x2="1280.7" y2="498.8" stroke="#333" stroke-width="1.4"/>
<line x1="1289.1" y1="494.3" x2="1289.1" y2="498.8" stroke="#333" stroke-width="1.4"/>
<line x1="1297.6" y1="494.3" x2="1297.6" y2="503.3" stroke="#333" stroke-width="1.6"/>
<line x1="1306.0" y1="494.3" x2="1306.0" y2="498.8" stroke="#333" stroke-width="1.4"/>
<line x1="1314.5" y1="494.3" x2="1314.5" y2="498.8" stroke="#333" stroke-width="1.4"/>
<line x1="1322.9" y1="494.3" x2="1322.9" y2="498.8" stroke="#333" stroke-width="1.4"/>
<line x1="1331.4" y1="494.3" x2="1331.4" y2="498.8" stroke="#333" stroke-width="1.4"/>
<line x1="1339.8" y1="494.3" x2="1339.8" y2="503.3" stroke="#333" stroke-width="1.6"/>
<line x1="1259.6" y1="460.6" x2="1259.6" y2="474.3" stroke="#111" stroke-width="3"/>
<polygon points="1252.0,473.2 1267.2,473.2 1259.6,494.0" fill="#0b7a12" stroke="#0a2a0a" stroke-width="1"/>
<line x1="917.1" y1="658.6" x2="1340.3" y2="658.6" stroke="#1a1a1a" stroke-width="1.5"/>
<line x1="917.6" y1="658.6" x2="917.6" y2="667.6" stroke="#333" stroke-width="1.6"/>
<line x1="927.5" y1="658.6" x2="927.5" y2="663.1" stroke="#333" stroke-width="1.4"/>
<line x1="937.3" y1="658.6" x2="937.3" y2="663.1" stroke="#333" stroke-width="1.4"/>
<line x1="947.2" y1="658.6" x2="947.2" y2="663.1" stroke="#333" stroke-width="1.4"/>
<line x1="957.0" y1="658.6" x2="957.0" y2="663.1" stroke="#333" stroke-width="1.4"/>
<line x1="966.9" y1="658.6" x2="966.9" y2="667.6" stroke="#333" stroke-width="1.6"/>
<line x1="976.7" y1="658.6" x2="976.7" y2="663.1" stroke="#333" stroke-width="1.4"/>
<line x1="986.6" y1="658.6" x2="986.6" y2="663.1" stroke="#333" stroke-width="1.4"/>
<line x1="996.4" y1="658.6" x2="996.4" y2="663.1" stroke="#333" stroke-width="1.4"/>
<line x1="1006.3" y1="658.6" x2="1006.3" y2="663.1" stroke="#333" stroke-width="1.4"/>
<line x1="1016.1" y1="658.6" x2="1016.1" y2="667.6" stroke="#333" stroke-width="1.6"/>
<line x1="1026.0" y1="658.6" x2="1026.0" y2="663.1" stroke="#333" stroke-width="1.4"/>
<line x1="1035.8" y1="658.6" x2="1035.8" y2="663.1" stroke="#333" stroke-width="1.4"/>
<line x1="1045.7" y1="658.6" x2="1045.7" y2="663.1" stroke="#333" stroke-width="1.4"/>
<line x1="1055.5" y1="658.6" x2="1055.5" y2="663.1" stroke="#333" stroke-width="1.4"/>
<line x1="1065.4" y1="658.6" x2="1065.4" y2="667.6" stroke="#333" stroke-width="1.6"/>
<line x1="1075.2" y1="658.6" x2="1075.2" y2="663.1" stroke="#333" stroke-width="1.4"/>
<line x1="1085.1" y1="658.6" x2="1085.1" y2="663.1" stroke="#333" stroke-width="1.4"/>
<line x1="1094.9" y1="658.6" x2="1094.9" y2="663.1" stroke="#333" stroke-width="1.4"/>
<line x1="1104.8" y1="658.6" x2="1104.8" y2="663.1" stroke="#333" stroke-width="1.4"/>
<line x1="1114.6" y1="658.6" x2="1114.6" y2="667.6" stroke="#333" stroke-width="1.6"/>
<line x1="1124.5" y1="658.6" x2="1124.5" y2="663.1" stroke="#333" stroke-width="1.4"/>
<line x1="1134.3" y1="658.6" x2="1134.3" y2="663.1" stroke="#333" stroke-width="1.4"/>
<line x1="1144.2" y1="658.6" x2="1144.2" y2="663.1" stroke="#333" stroke-width="1.4"/>
<line x1="1154.0" y1="658.6" x2="1154.0" y2="663.1" stroke="#333" stroke-width="1.4"/>
<line x1="1163.9" y1="658.6" x2="1163.9" y2="667.6" stroke="#333" stroke-width="1.6"/>
<line x1="1173.7" y1="658.6" x2="1173.7" y2="663.1" stroke="#333" stroke-width="1.4"/>
<line x1="1183.6" y1="658.6" x2="1183.6" y2="663.1" stroke="#333" stroke-width="1.4"/>
<line x1="1193.4" y1="658.6" x2="1193.4" y2="663.1" stroke="#333" stroke-width="1.4"/>
<line x1="1203.3" y1="658.6" x2="1203.3" y2="663.1" stroke="#333" stroke-width="1.4"/>
<line x1="1213.1" y1="658.6" x2="1213.1" y2="667.6" stroke="#333" stroke-width="1.6"/>
<line x1="1223.0" y1="658.6" x2="1223.0" y2="663.1" stroke="#333" stroke-width="1.4"/>
<line x1="1232.8" y1="658.6" x2="1232.8" y2="663.1" stroke="#333" stroke-width="1.4"/>
<line x1="1242.7" y1="658.6" x2="1242.7" y2="663.1" stroke="#333" stroke-width="1.4"/>
<line x1="1252.5" y1="658.6" x2="1252.5" y2="663.1" stroke="#333" stroke-width="1.4"/>
<line x1="1262.4" y1="658.6" x2="1262.4" y2="667.6" stroke="#333" stroke-width="1.6"/>
<line x1="1272.2" y1="658.6" x2="1272.2" y2="663.1" stroke="#333" stroke-width="1.4"/>
<line x1="1282.1" y1="658.6" x2="1282.1" y2="663.1" stroke="#333" stroke-width="1.4"/>
<line x1="1292.0" y1="658.6" x2="1292.0" y2="663.1" stroke="#333" stroke-width="1.4"/>
<line x1="1301.8" y1="658.6" x2="1301.8" y2="663.1" stroke="#333" stroke-width="1.4"/>
<line x1="1311.7" y1="658.6" x2="1311.7" y2="667.6" stroke="#333" stroke-width="1.6"/>
<line x1="1317.3" y1="658.6" x2="1317.3" y2="663.1" stroke="#333" stroke-width="1.4"/>
<line x1="1322.9" y1="658.6" x2="1322.9" y2="663.1" stroke="#333" stroke-width="1.4"/>
<line x1="1328.5" y1="658.6" x2="1328.5" y2="663.1" stroke="#333" stroke-width="1.4"/>
<line x1="1334.2" y1="658.6" x2="1334.2" y2="663.1" stroke="#333" stroke-width="1.4"/>
<line x1="1339.8" y1="658.6" x2="1339.8" y2="667.6" stroke="#333" stroke-width="1.6"/>
<line x1="983.0" y1="624.9" x2="983.0" y2="638.6" stroke="#111" stroke-width="3"/>
<polygon points="975.4,637.5 990.6,637.5 983.0,658.3000000000001" fill="#0b7a12" stroke="#0a2a0a" stroke-width="1"/>
<defs><radialGradient id="bez" cx="726.5" cy="282" r="150" gradientUnits="userSpaceOnUse"><stop offset="0.76" stop-color="#62647c"/><stop offset="0.88" stop-color="#6c6e88"/><stop offset="0.975" stop-color="#797b97"/><stop offset="0.99" stop-color="#9c9fbd"/><stop offset="1" stop-color="#b4b7d2"/></radialGradient><radialGradient id="face" cx="726.5" cy="282" r="115" gradientUnits="userSpaceOnUse"><stop offset="0.39" stop-color="#2e2f3a"/><stop offset="0.47" stop-color="#464756"/><stop offset="0.56" stop-color="#545567"/><stop offset="0.93" stop-color="#5a5b6d"/><stop offset="0.985" stop-color="#444555"/><stop offset="1" stop-color="#3a3b4a"/></radialGradient><linearGradient id="wedge" gradientUnits="userSpaceOnUse" x1="647.3" y1="270.7" x2="682.9" y2="275.8"><stop offset="0" stop-color="#e81010"/><stop offset="0.35" stop-color="#f6b0a8"/><stop offset="0.7" stop-color="#fbe9e4"/><stop offset="1" stop-color="#e9d8c8"/></linearGradient><filter id="blur" x="-20%" y="-20%" width="140%" height="140%"><feGaussianBlur stdDeviation="2.6"/></filter><clipPath id="faceclip"><path d="M645.54,362.96 A114.5,114.5 0 1 1 841.00,282.00 L726.51,282.00 A0.01,0.01 0 1 0 726.49,282.01 Z"/></clipPath></defs>
<path d="M620.43,388.07 A150,150 0 1 1 876.50,282.00 L726.51,282.00 A0.01,0.01 0 1 0 726.49,282.01 Z" fill="url(#bez)"/>
<path d="M645.54,362.96 A114.5,114.5 0 1 1 841.00,282.00 L726.51,282.00 A0.01,0.01 0 1 0 726.49,282.01 Z" fill="url(#face)"/>
<path d="M645.18,363.32 A115.0,115.0 0 1 1 841.50,282.00 L840.10,282.00 A113.6,113.6 0 1 0 646.17,362.33 Z" fill="#9497b4" opacity="0.85"/>
<path d="M641.13,232.97 A98.44839631086802,98.44839631086802 0 0 1 642.00,231.48 L644.10,232.74 A96,96 0 0 0 643.25,234.19 Z" fill="rgb(40, 180, 40)" fill-opacity="0.07"/>
<path d="M641.13,231.21 A99.33342271964958,99.33342271964958 0 0 1 642.03,229.72 L644.87,231.48 A96,96 0 0 0 644.00,232.91 Z" fill="rgb(39, 181, 39)" fill-opacity="0.10"/>
<path d="M641.37,229.56 A99.99098928008881,99.99098928008881 0 0 1 642.30,228.08 L645.66,230.23 A96,96 0 0 0 644.76,231.65 Z" fill="rgb(39, 181, 39)" fill-opacity="0.13"/>
<path d="M641.71,227.95 A100.5482366466469,100.5482366466469 0 0 1 642.67,226.48 L646.46,228.99 A96,96 0 0 0 645.55,230.40 Z" fill="rgb(39, 181, 39)" fill-opacity="0.17"/>
<path d="M642.14,226.38 A101.04433988239651,101.04433988239651 0 0 1 643.13,224.92 L647.29,227.77 A96,96 0 0 0 646.35,229.16 Z" fill="rgb(38, 182, 38)" fill-opacity="0.20"/>
<path d="M642.63,224.84 A101.49784053477127,101.49784053477127 0 0 1 643.64,223.38 L648.13,226.55 A96,96 0 0 0 647.17,227.93 Z" fill="rgb(38, 182, 38)" fill-opacity="0.23"/>
<path d="M643.18,223.31 A101.91932425019509,101.91932425019509 0 0 1 644.21,221.86 L648.99,225.35 A96,96 0 0 0 648.02,226.72 Z" fill="rgb(37, 183, 37)" fill-opacity="0.27"/>
<path d="M643.77,221.80 A102.31553575038518,102.31553575038518 0 0 1 644.83,220.36 L649.87,224.17 A96,96 0 0 0 648.88,225.52 Z" fill="rgb(37, 183, 37)" fill-opacity="0.30"/>
<path d="M644.40,220.31 A102.6910977731049,102.6910977731049 0 0 1 645.50,218.88 L650.77,223.00 A96,96 0 0 0 649.75,224.33 Z" fill="rgb(36, 184, 36)" fill-opacity="0.33"/>
<path d="M645.08,218.83 A103.0493487184931,103.0493487184931 0 0 1 646.20,217.42 L651.69,221.84 A96,96 0 0 0 650.65,223.15 Z" fill="rgb(36, 184, 36)" fill-opacity="0.37"/>
<path d="M645.79,217.37 A103.3927963540008,103.3927963540008 0 0 1 646.94,215.97 L652.62,220.69 A96,96 0 0 0 651.56,221.99 Z" fill="rgb(36, 184, 36)" fill-opacity="0.40"/>
<path d="M646.54,215.93 A103.72338340663266,103.72338340663266 0 0 1 647.71,214.54 L653.58,219.56 A96,96 0 0 0 652.50,220.85 Z" fill="rgb(35, 185, 35)" fill-opacity="0.43"/>
<path d="M647.33,214.50 A104.04265260462498,104.04265260462498 0 0 1 648.52,213.13 L654.55,218.45 A96,96 0 0 0 653.45,219.72 Z" fill="rgb(35, 185, 35)" fill-opacity="0.47"/>
<path d="M648.14,213.09 A104.3518542217845,104.3518542217845 0 0 1 649.36,211.73 L655.53,217.35 A96,96 0 0 0 654.41,218.60 Z" fill="rgb(35, 186, 35)" fill-opacity="0.50"/>
<path d="M648.99,211.69 A104.65201892045559,104.65201892045559 0 0 1 650.23,210.34 L656.54,216.27 A96,96 0 0 0 655.40,217.50 Z" fill="rgb(34, 186, 34)" fill-opacity="0.54"/>
<path d="M649.87,210.30 A104.94400870400992,104.94400870400992 0 0 1 651.13,208.97 L657.56,215.20 A96,96 0 0 0 656.40,216.41 Z" fill="rgb(34, 187, 34)" fill-opacity="0.57"/>
<path d="M650.77,208.93 A105.22855354032022,105.22855354032022 0 0 1 652.06,207.62 L658.59,214.14 A96,96 0 0 0 657.42,215.34 Z" fill="rgb(34, 187, 34)" fill-opacity="0.60"/>
<path d="M651.71,207.58 A105.50627830682058,105.50627830682058 0 0 1 653.02,206.29 L659.64,213.11 A96,96 0 0 0 658.45,214.29 Z" fill="rgb(33, 187, 33)" fill-opacity="0.64"/>
<path d="M652.68,206.25 A105.77772301955365,105.77772301955365 0 0 1 654.01,204.97 L660.71,212.09 A96,96 0 0 0 659.50,213.25 Z" fill="rgb(33, 188, 33)" fill-opacity="0.67"/>
<path d="M653.67,204.93 A106.04335829120868,106.04335829120868 0 0 1 655.03,203.66 L661.79,211.08 A96,96 0 0 0 660.57,212.22 Z" fill="rgb(33, 188, 33)" fill-opacity="0.71"/>
<path d="M654.69,203.62 A106.30359732931923,106.30359732931923 0 0 1 656.07,202.38 L662.89,210.10 A96,96 0 0 0 661.65,211.22 Z" fill="rgb(32, 189, 32)" fill-opacity="0.74"/>
<path d="M655.73,202.34 A106.55880537928097,106.55880537928097 0 0 1 657.13,201.11 L664.01,209.13 A96,96 0 0 0 662.74,210.23 Z" fill="rgb(32, 189, 32)" fill-opacity="0.78"/>
<path d="M656.80,201.07 A106.80930724937163,106.80930724937163 0 0 1 658.23,199.86 L665.14,208.17 A96,96 0 0 0 663.86,209.26 Z" fill="rgb(32, 190, 32)" fill-opacity="0.81"/>
<path d="M657.90,199.81 A107.0553933749035,107.0553933749035 0 0 1 659.34,198.63 L666.28,207.24 A96,96 0 0 0 664.98,208.30 Z" fill="rgb(31, 190, 31)" fill-opacity="0.85"/>
<path d="M659.02,198.58 A107.29732475494013,107.29732475494013 0 0 1 660.49,197.41 L667.44,206.32 A96,96 0 0 0 666.12,207.36 Z" fill="rgb(31, 190, 31)" fill-opacity="0.88"/>
<path d="M660.16,197.36 A107.53533700845165,107.53533700845165 0 0 1 661.65,196.22 L668.61,205.42 A96,96 0 0 0 667.28,206.44 Z" fill="rgb(31, 191, 31)" fill-opacity="0.91"/>
<path d="M661.33,196.17 A107.76964373519854,107.76964373519854 0 0 1 662.84,195.04 L669.79,204.54 A96,96 0 0 0 668.45,205.54 Z" fill="rgb(30, 191, 30)" fill-opacity="0.95"/>
<path d="M662.52,194.99 A108.00043932214918,108.00043932214918 0 0 1 664.05,193.88 L670.99,203.67 A96,96 0 0 0 669.63,204.66 Z" fill="rgb(30, 192, 30)" fill-opacity="0.98"/>
<path d="M663.29,194.15 A108.22790130365595,108.22790130365595 0 0 1 665.74,192.44 L672.61,202.56 A96,96 0 0 0 670.43,204.07 Z" fill="rgb(30, 192, 30)" fill-opacity="1.00"/>
<path d="M664.52,193.00 A108.45219235944869,108.45219235944869 0 0 1 667.00,191.32 L673.83,201.74 A96,96 0 0 0 671.64,203.22 Z" fill="rgb(31, 193, 30)" fill-opacity="1.00"/>
<path d="M665.78,191.88 A108.6734620163668,108.6734620163668 0 0 1 668.29,190.23 L675.08,200.94 A96,96 0 0 0 672.86,202.39 Z" fill="rgb(32, 193, 30)" fill-opacity="1.00"/>
<path d="M667.05,190.77 A108.89184810599369,108.89184810599369 0 0 1 669.59,189.16 L676.33,200.15 A96,96 0 0 0 674.09,201.57 Z" fill="rgb(33, 193, 29)" fill-opacity="1.00"/>
<path d="M668.40,189.77 A109,109 0 0 1 670.97,188.20 L677.59,199.39 A96,96 0 0 0 675.33,200.77 Z" fill="rgb(34, 194, 29)" fill-opacity="1.00"/>
<path d="M669.83,188.89 A109,109 0 0 1 672.42,187.36 L678.87,198.65 A96,96 0 0 0 676.59,199.99 Z" fill="rgb(35, 194, 29)" fill-opacity="1.00"/>
<path d="M671.27,188.03 A109,109 0 0 1 673.88,186.54 L680.16,197.93 A96,96 0 0 0 677.86,199.24 Z" fill="rgb(36, 195, 29)" fill-opacity="1.00"/>
<path d="M672.72,187.19 A109,109 0 0 1 675.36,185.74 L681.46,197.22 A96,96 0 0 0 679.14,198.50 Z" fill="rgb(37, 195, 29)" fill-opacity="1.00"/>
<path d="M674.19,186.37 A109,109 0 0 1 676.85,184.97 L682.77,196.54 A96,96 0 0 0 680.43,197.78 Z" fill="rgb(38, 195, 29)" fill-opacity="1.00"/>
<path d="M675.66,185.58 A109,109 0 0 1 678.34,184.21 L684.09,195.88 A96,96 0 0 0 681.73,197.08 Z" fill="rgb(39, 196, 29)" fill-opacity="1.00"/>
<path d="M677.15,184.81 A109,109 0 0 1 679.86,183.48 L685.42,195.23 A96,96 0 0 0 683.04,196.40 Z" fill="rgb(40, 196, 28)" fill-opacity="1.00"/>
<path d="M678.65,184.06 A109,109 0 0 1 681.38,182.78 L686.76,194.61 A96,96 0 0 0 684.36,195.74 Z" fill="rgb(41, 197, 28)" fill-opacity="1.00"/>
<path d="M680.17,183.34 A109,109 0 0 1 682.91,182.10 L688.11,194.01 A96,96 0 0 0 685.69,195.10 Z" fill="rgb(42, 197, 28)" fill-opacity="1.00"/>
<path d="M681.69,182.64 A109,109 0 0 1 684.45,181.44 L689.47,193.43 A96,96 0 0 0 687.04,194.49 Z" fill="rgb(43, 197, 28)" fill-opacity="1.00"/>
<path d="M683.23,181.96 A109,109 0 0 1 686.00,180.80 L690.83,192.87 A96,96 0 0 0 688.39,193.89 Z" fill="rgb(44, 198, 28)" fill-opacity="1.00"/>
<path d="M684.77,181.30 A109,109 0 0 1 687.56,180.19 L692.21,192.33 A96,96 0 0 0 689.75,193.31 Z" fill="rgb(45, 198, 28)" fill-opacity="1.00"/>
<path d="M686.32,180.67 A109,109 0 0 1 689.14,179.60 L693.59,191.82 A96,96 0 0 0 691.12,192.76 Z" fill="rgb(45, 199, 27)" fill-opacity="1.00"/>
<path d="M687.89,180.07 A109,109 0 0 1 690.72,179.04 L694.98,191.32 A96,96 0 0 0 692.49,192.23 Z" fill="rgb(46, 199, 27)" fill-opacity="1.00"/>
<path d="M689.46,179.49 A109,109 0 0 1 692.30,178.50 L696.38,190.85 A96,96 0 0 0 693.88,191.71 Z" fill="rgb(47, 200, 27)" fill-opacity="1.00"/>
<path d="M691.04,178.93 A109,109 0 0 1 693.90,177.99 L697.79,190.39 A96,96 0 0 0 695.27,191.22 Z" fill="rgb(48, 200, 27)" fill-opacity="1.00"/>
<path d="M692.63,178.39 A109,109 0 0 1 695.51,177.50 L699.20,189.96 A96,96 0 0 0 696.67,190.75 Z" fill="rgb(49, 200, 27)" fill-opacity="1.00"/>
<path d="M694.23,177.89 A109,109 0 0 1 697.12,177.04 L700.62,189.55 A96,96 0 0 0 698.08,190.30 Z" fill="rgb(50, 201, 27)" fill-opacity="1.00"/>
<path d="M695.84,177.40 A109,109 0 0 1 698.74,176.60 L702.05,189.17 A96,96 0 0 0 699.49,189.88 Z" fill="rgb(51, 201, 26)" fill-opacity="1.00"/>
<path d="M697.45,176.94 A109,109 0 0 1 700.36,176.18 L703.48,188.80 A96,96 0 0 0 700.91,189.47 Z" fill="rgb(52, 202, 26)" fill-opacity="1.00"/>
<path d="M699.07,176.51 A109,109 0 0 1 701.99,175.79 L704.91,188.46 A96,96 0 0 0 702.34,189.09 Z" fill="rgb(53, 202, 26)" fill-opacity="1.00"/>
<path d="M700.70,176.10 A109,109 0 0 1 703.63,175.43 L706.36,188.14 A96,96 0 0 0 703.77,188.73 Z" fill="rgb(54, 202, 26)" fill-opacity="1.00"/>
<path d="M702.33,175.71 A109,109 0 0 1 705.27,175.09 L707.80,187.84 A96,96 0 0 0 705.21,188.39 Z" fill="rgb(55, 203, 26)" fill-opacity="1.00"/>
<path d="M703.97,175.35 A109,109 0 0 1 706.92,174.77 L709.25,187.56 A96,96 0 0 0 706.65,188.07 Z" fill="rgb(56, 203, 26)" fill-opacity="1.00"/>
<path d="M705.61,175.02 A109,109 0 0 1 708.57,174.48 L710.71,187.31 A96,96 0 0 0 708.10,187.78 Z" fill="rgb(57, 204, 26)" fill-opacity="1.00"/>
<path d="M707.26,174.71 A109,109 0 0 1 710.23,174.22 L712.17,187.08 A96,96 0 0 0 709.55,187.51 Z" fill="rgb(58, 204, 25)" fill-opacity="1.00"/>
<path d="M708.91,174.43 A109,109 0 0 1 711.89,173.98 L713.63,186.87 A96,96 0 0 0 711.01,187.26 Z" fill="rgb(59, 204, 25)" fill-opacity="1.00"/>
<path d="M710.57,174.17 A109,109 0 0 1 713.55,173.77 L715.10,186.68 A96,96 0 0 0 712.47,187.03 Z" fill="rgb(60, 205, 25)" fill-opacity="1.00"/>
<path d="M712.23,173.94 A109,109 0 0 1 715.22,173.59 L716.56,186.52 A96,96 0 0 0 713.93,186.83 Z" fill="rgb(62, 205, 25)" fill-opacity="1.00"/>
<path d="M713.89,173.73 A109,109 0 0 1 716.89,173.42 L718.03,186.37 A96,96 0 0 0 715.40,186.64 Z" fill="rgb(65, 206, 25)" fill-opacity="1.00"/>
<path d="M715.56,173.55 A109,109 0 0 1 718.56,173.29 L719.51,186.26 A96,96 0 0 0 716.87,186.48 Z" fill="rgb(68, 207, 24)" fill-opacity="1.00"/>
<path d="M717.23,173.39 A109,109 0 0 1 720.23,173.18 L720.98,186.16 A96,96 0 0 0 718.34,186.35 Z" fill="rgb(71, 208, 24)" fill-opacity="1.00"/>
<path d="M718.90,173.26 A109,109 0 0 1 721.91,173.10 L722.46,186.09 A96,96 0 0 0 719.81,186.23 Z" fill="rgb(74, 208, 24)" fill-opacity="1.00"/>
<path d="M720.58,173.16 A109,109 0 0 1 723.58,173.04 L723.93,186.03 A96,96 0 0 0 721.28,186.14 Z" fill="rgb(77, 209, 23)" fill-opacity="1.00"/>
<path d="M722.25,173.08 A109,109 0 0 1 725.26,173.01 L725.41,186.01 A96,96 0 0 0 722.76,186.07 Z" fill="rgb(80, 210, 23)" fill-opacity="1.00"/>
<path d="M723.93,173.03 A109,109 0 0 1 726.94,173.00 L726.89,186.00 A96,96 0 0 0 724.24,186.03 Z" fill="rgb(83, 210, 23)" fill-opacity="1.00"/>
<path d="M725.61,173.00 A109,109 0 0 1 728.62,173.02 L728.36,186.02 A96,96 0 0 0 725.71,186.00 Z" fill="rgb(87, 211, 22)" fill-opacity="1.00"/>
<path d="M727.28,173.00 A109,109 0 0 1 730.29,173.07 L729.84,186.06 A96,96 0 0 0 727.19,186.00 Z" fill="rgb(90, 212, 22)" fill-opacity="1.00"/>
<path d="M728.96,173.03 A109,109 0 0 1 731.97,173.14 L731.32,186.12 A96,96 0 0 0 728.67,186.02 Z" fill="rgb(93, 213, 22)" fill-opacity="1.00"/>
<path d="M730.64,173.08 A109,109 0 0 1 733.64,173.23 L732.79,186.21 A96,96 0 0 0 730.14,186.07 Z" fill="rgb(96, 213, 21)" fill-opacity="1.00"/>
<path d="M732.31,173.16 A109,109 0 0 1 735.31,173.36 L734.26,186.31 A96,96 0 0 0 731.62,186.14 Z" fill="rgb(99, 214, 21)" fill-opacity="1.00"/>
<path d="M733.99,173.26 A109,109 0 0 1 736.99,173.51 L735.73,186.45 A96,96 0 0 0 733.09,186.23 Z" fill="rgb(102, 215, 21)" fill-opacity="1.00"/>
<path d="M735.66,173.39 A109,109 0 0 1 738.65,173.68 L737.20,186.60 A96,96 0 0 0 734.57,186.34 Z" fill="rgb(105, 215, 20)" fill-opacity="1.00"/>
<path d="M737.33,173.54 A109,109 0 0 1 740.32,173.88 L738.67,186.77 A96,96 0 0 0 736.04,186.47 Z" fill="rgb(108, 216, 20)" fill-opacity="1.00"/>
<path d="M739.00,173.72 A109,109 0 0 1 741.98,174.10 L740.13,186.97 A96,96 0 0 0 737.51,186.63 Z" fill="rgb(112, 217, 20)" fill-opacity="1.00"/>
<path d="M740.66,173.92 A109,109 0 0 1 743.64,174.36 L741.60,187.19 A96,96 0 0 0 738.97,186.81 Z" fill="rgb(115, 218, 20)" fill-opacity="1.00"/>
<path d="M742.32,174.15 A109,109 0 0 1 745.29,174.63 L743.05,187.44 A96,96 0 0 0 740.44,187.02 Z" fill="rgb(118, 218, 19)" fill-opacity="1.00"/>
<path d="M743.98,174.41 A109,109 0 0 1 746.94,174.93 L744.51,187.70 A96,96 0 0 0 741.90,187.24 Z" fill="rgb(121, 219, 19)" fill-opacity="1.00"/>
<path d="M745.63,174.69 A109,109 0 0 1 748.59,175.26 L745.95,187.99 A96,96 0 0 0 743.35,187.49 Z" fill="rgb(124, 220, 19)" fill-opacity="1.00"/>
<path d="M747.28,175.00 A109,109 0 0 1 750.23,175.61 L747.40,188.30 A96,96 0 0 0 744.80,187.76 Z" fill="rgb(127, 220, 18)" fill-opacity="1.00"/>
<path d="M748.93,175.33 A109,109 0 0 1 751.86,175.99 L748.84,188.63 A96,96 0 0 0 746.25,188.05 Z" fill="rgb(130, 221, 18)" fill-opacity="1.00"/>
<path d="M750.57,175.69 A109,109 0 0 1 753.49,176.39 L750.27,188.99 A96,96 0 0 0 747.69,188.37 Z" fill="rgb(133, 222, 18)" fill-opacity="1.00"/>
<path d="M752.20,176.07 A109,109 0 0 1 755.11,176.82 L751.70,189.37 A96,96 0 0 0 749.13,188.71 Z" fill="rgb(137, 223, 17)" fill-opacity="1.00"/>
<path d="M753.82,176.48 A109,109 0 0 1 756.73,177.27 L753.12,189.77 A96,96 0 0 0 750.57,189.07 Z" fill="rgb(140, 223, 17)" fill-opacity="1.00"/>
<path d="M755.45,176.91 A109,109 0 0 1 758.33,177.75 L754.54,190.19 A96,96 0 0 0 751.99,189.45 Z" fill="rgb(143, 224, 17)" fill-opacity="1.00"/>
<path d="M757.06,177.37 A109,109 0 0 1 759.93,178.25 L755.95,190.63 A96,96 0 0 0 753.41,189.85 Z" fill="rgb(146, 225, 16)" fill-opacity="1.00"/>
<path d="M758.66,177.85 A109,109 0 0 1 761.53,178.78 L757.35,191.09 A96,96 0 0 0 754.83,190.27 Z" fill="rgb(149, 225, 16)" fill-opacity="1.00"/>
<path d="M760.26,178.36 A109,109 0 0 1 763.11,179.33 L758.74,191.58 A96,96 0 0 0 756.24,190.72 Z" fill="rgb(152, 226, 16)" fill-opacity="1.00"/>
<path d="M761.85,178.89 A109,109 0 0 1 764.69,179.91 L760.13,192.08 A96,96 0 0 0 757.64,191.19 Z" fill="rgb(155, 227, 15)" fill-opacity="1.00"/>
<path d="M763.44,179.45 A109,109 0 0 1 766.25,180.51 L761.51,192.61 A96,96 0 0 0 759.03,191.68 Z" fill="rgb(158, 228, 15)" fill-opacity="1.00"/>
<path d="M765.01,180.03 A109,109 0 0 1 767.81,181.13 L762.88,193.16 A96,96 0 0 0 760.42,192.19 Z" fill="rgb(162, 228, 15)" fill-opacity="1.00"/>
<path d="M766.57,180.63 A109,109 0 0 1 769.36,181.78 L764.25,193.73 A96,96 0 0 0 761.79,192.72 Z" fill="rgb(166, 229, 14)" fill-opacity="1.00"/>
<path d="M768.13,181.26 A109,109 0 0 1 770.89,182.45 L765.60,194.32 A96,96 0 0 0 763.16,193.28 Z" fill="rgb(169, 229, 13)" fill-opacity="1.00"/>
<path d="M769.67,181.92 A109,109 0 0 1 772.42,183.15 L766.94,194.94 A96,96 0 0 0 764.53,193.85 Z" fill="rgb(173, 230, 13)" fill-opacity="1.00"/>
<path d="M771.21,182.59 A109,109 0 0 1 773.94,183.86 L768.28,195.57 A96,96 0 0 0 765.88,194.45 Z" fill="rgb(177, 230, 12)" fill-opacity="1.00"/>
<path d="M772.73,183.29 A109,109 0 0 1 775.44,184.60 L769.60,196.22 A96,96 0 0 0 767.22,195.06 Z" fill="rgb(181, 231, 12)" fill-opacity="1.00"/>
<path d="M774.25,184.01 A109,109 0 0 1 776.93,185.37 L770.92,196.89 A96,96 0 0 0 768.55,195.70 Z" fill="rgb(184, 231, 11)" fill-opacity="1.00"/>
<path d="M775.75,184.76 A109,109 0 0 1 778.41,186.16 L772.22,197.59 A96,96 0 0 0 769.88,196.36 Z" fill="rgb(188, 232, 10)" fill-opacity="1.00"/>
<path d="M777.24,185.53 A109,109 0 0 1 779.88,186.97 L773.52,198.30 A96,96 0 0 0 771.19,197.04 Z" fill="rgb(192, 232, 10)" fill-opacity="1.00"/>
<path d="M778.72,186.32 A109,109 0 0 1 781.34,187.80 L774.80,199.03 A96,96 0 0 0 772.49,197.73 Z" fill="rgb(196, 233, 9)" fill-opacity="1.00"/>
<path d="M780.18,187.14 A109,109 0 0 1 782.78,188.65 L776.07,199.79 A96,96 0 0 0 773.78,198.45 Z" fill="rgb(199, 233, 8)" fill-opacity="1.00"/>
<path d="M781.64,187.97 A109,109 0 0 1 784.21,189.53 L777.33,200.56 A96,96 0 0 0 775.06,199.19 Z" fill="rgb(203, 234, 8)" fill-opacity="1.00"/>
<path d="M783.08,188.83 A109,109 0 0 1 785.63,190.43 L778.58,201.35 A96,96 0 0 0 776.33,199.94 Z" fill="rgb(207, 234, 7)" fill-opacity="1.00"/>
<path d="M784.50,189.71 A109,109 0 0 1 787.03,191.35 L779.81,202.16 A96,96 0 0 0 777.59,200.72 Z" fill="rgb(211, 235, 7)" fill-opacity="1.00"/>
<path d="M785.92,190.62 A109,109 0 0 1 788.42,192.29 L781.03,202.99 A96,96 0 0 0 778.83,201.52 Z" fill="rgb(214, 235, 6)" fill-opacity="1.00"/>
<path d="M787.32,191.54 A109,109 0 0 1 789.79,193.26 L782.24,203.84 A96,96 0 0 0 780.06,202.33 Z" fill="rgb(218, 236, 5)" fill-opacity="1.00"/>
<path d="M788.70,192.49 A109,109 0 0 1 791.15,194.24 L783.44,204.71 A96,96 0 0 0 781.28,203.17 Z" fill="rgb(222, 236, 5)" fill-opacity="1.00"/>
<path d="M790.07,193.46 A109,109 0 0 1 792.49,195.25 L784.62,205.59 A96,96 0 0 0 782.49,204.02 Z" fill="rgb(226, 237, 4)" fill-opacity="1.00"/>
<path d="M791.43,194.45 A109,109 0 0 1 793.82,196.27 L785.79,206.50 A96,96 0 0 0 783.68,204.89 Z" fill="rgb(229, 237, 3)" fill-opacity="1.00"/>
<path d="M792.76,195.46 A109,109 0 0 1 795.13,197.32 L786.94,207.42 A96,96 0 0 0 784.86,205.78 Z" fill="rgb(233, 238, 3)" fill-opacity="1.00"/>
<path d="M794.09,196.49 A109,109 0 0 1 796.42,198.38 L788.08,208.36 A96,96 0 0 0 786.03,206.68 Z" fill="rgb(237, 238, 2)" fill-opacity="1.00"/>
<path d="M795.40,197.54 A109,109 0 0 1 797.70,199.47 L789.21,209.31 A96,96 0 0 0 787.18,207.61 Z" fill="rgb(241, 239, 2)" fill-opacity="1.00"/>
<path d="M796.69,198.61 A109,109 0 0 1 798.96,200.57 L790.32,210.29 A96,96 0 0 0 788.32,208.55 Z" fill="rgb(244, 239, 1)" fill-opacity="1.00"/>
<path d="M797.96,199.70 A109,109 0 0 1 800.21,201.70 L791.42,211.28 A96,96 0 0 0 789.44,209.51 Z" fill="rgb(248, 240, 0)" fill-opacity="1.00"/>
<path d="M799.22,200.80 A109,109 0 0 1 801.43,202.84 L792.50,212.28 A96,96 0 0 0 790.55,210.49 Z" fill="rgb(250, 238, 0)" fill-opacity="1.00"/>
<path d="M800.46,201.93 A109,109 0 0 1 802.64,204.01 L793.56,213.31 A96,96 0 0 0 791.64,211.48 Z" fill="rgb(250, 234, 0)" fill-opacity="1.00"/>
<path d="M801.68,203.08 A109,109 0 0 1 803.83,205.19 L794.61,214.35 A96,96 0 0 0 792.72,212.49 Z" fill="rgb(251, 231, 0)" fill-opacity="1.00"/>
<path d="M802.89,204.25 A109,109 0 0 1 805.01,206.38 L795.64,215.40 A96,96 0 0 0 793.78,213.52 Z" fill="rgb(251, 227, 0)" fill-opacity="1.00"/>
<path d="M804.08,205.43 A109,109 0 0 1 806.16,207.60 L796.66,216.48 A96,96 0 0 0 794.83,214.56 Z" fill="rgb(251, 223, 0)" fill-opacity="1.00"/>
<path d="M805.25,206.63 A109,109 0 0 1 807.30,208.84 L797.66,217.56 A96,96 0 0 0 795.85,215.62 Z" fill="rgb(251, 220, 0)" fill-opacity="1.00"/>
<path d="M806.40,207.85 A109,109 0 0 1 808.41,210.09 L798.64,218.66 A96,96 0 0 0 796.87,216.70 Z" fill="rgb(252, 216, 0)" fill-opacity="1.00"/>
<path d="M807.53,209.09 A109,109 0 0 1 809.51,211.36 L799.61,219.78 A96,96 0 0 0 797.86,217.79 Z" fill="rgb(252, 212, 0)" fill-opacity="1.00"/>
<path d="M808.64,210.35 A109,109 0 0 1 810.59,212.64 L800.56,220.91 A96,96 0 0 0 798.84,218.89 Z" fill="rgb(252, 209, 0)" fill-opacity="1.00"/>
<path d="M809.73,211.62 A109,109 0 0 1 811.64,213.94 L801.49,222.06 A96,96 0 0 0 799.81,220.01 Z" fill="rgb(252, 205, 0)" fill-opacity="1.00"/>
<path d="M810.81,212.91 A109,109 0 0 1 812.68,215.26 L802.40,223.22 A96,96 0 0 0 800.75,221.15 Z" fill="rgb(252, 201, 0)" fill-opacity="1.00"/>
<path d="M811.86,214.21 A109,109 0 0 1 813.70,216.60 L803.30,224.40 A96,96 0 0 0 801.68,222.30 Z" fill="rgb(253, 197, 0)" fill-opacity="1.00"/>
<path d="M812.89,215.54 A109,109 0 0 1 814.69,217.95 L804.18,225.59 A96,96 0 0 0 802.59,223.46 Z" fill="rgb(253, 194, 0)" fill-opacity="1.00"/>
<path d="M813.90,216.87 A109,109 0 0 1 815.67,219.31 L805.03,226.79 A96,96 0 0 0 803.48,224.64 Z" fill="rgb(253, 190, 0)" fill-opacity="1.00"/>
<path d="M814.90,218.23 A109,109 0 0 1 816.62,220.69 L805.87,228.00 A96,96 0 0 0 804.35,225.83 Z" fill="rgb(253, 186, 0)" fill-opacity="1.00"/>
<path d="M815.87,219.59 A109,109 0 0 1 817.56,222.08 L806.70,229.23 A96,96 0 0 0 805.21,227.04 Z" fill="rgb(254, 183, 0)" fill-opacity="1.00"/>
<path d="M816.82,220.98 A109,109 0 0 1 818.47,223.49 L807.50,230.47 A96,96 0 0 0 806.04,228.25 Z" fill="rgb(254, 179, 0)" fill-opacity="1.00"/>
<path d="M817.74,222.37 A109,109 0 0 1 819.36,224.91 L808.28,231.72 A96,96 0 0 0 806.86,229.48 Z" fill="rgb(254, 175, 0)" fill-opacity="1.00"/>
<path d="M818.65,223.78 A109,109 0 0 1 820.22,226.35 L809.05,232.99 A96,96 0 0 0 807.66,230.73 Z" fill="rgb(254, 171, 0)" fill-opacity="1.00"/>
<path d="M819.54,225.21 A109,109 0 0 1 821.07,227.80 L809.79,234.26 A96,96 0 0 0 808.44,231.98 Z" fill="rgb(255, 168, 0)" fill-opacity="1.00"/>
<path d="M820.40,226.65 A109,109 0 0 1 821.89,229.26 L810.51,235.55 A96,96 0 0 0 809.20,233.25 Z" fill="rgb(255, 164, 0)" fill-opacity="1.00"/>
<path d="M821.24,228.10 A109,109 0 0 1 822.69,230.73 L811.22,236.85 A96,96 0 0 0 809.94,234.53 Z" fill="rgb(255, 160, 0)" fill-opacity="1.00"/>
<path d="M822.06,229.56 A109,109 0 0 1 823.47,232.22 L811.90,238.16 A96,96 0 0 0 810.66,235.82 Z" fill="rgb(255, 154, 0)" fill-opacity="1.00"/>
<path d="M822.85,231.04 A109,109 0 0 1 824.22,233.72 L812.57,239.48 A96,96 0 0 0 811.36,237.12 Z" fill="rgb(255, 147, 0)" fill-opacity="1.00"/>
<path d="M823.63,232.53 A109,109 0 0 1 824.95,235.23 L813.21,240.81 A96,96 0 0 0 812.04,238.43 Z" fill="rgb(255, 140, 0)" fill-opacity="1.00"/>
<path d="M824.38,234.03 A109,109 0 0 1 825.66,236.75 L813.84,242.14 A96,96 0 0 0 812.70,239.75 Z" fill="rgb(255, 132, 0)" fill-opacity="1.00"/>
<path d="M825.10,235.54 A109,109 0 0 1 826.35,238.28 L814.44,243.49 A96,96 0 0 0 813.34,241.08 Z" fill="rgb(255, 125, 0)" fill-opacity="1.00"/>
<path d="M825.81,237.06 A109,109 0 0 1 827.01,239.82 L815.02,244.85 A96,96 0 0 0 813.96,242.42 Z" fill="rgb(255, 118, 0)" fill-opacity="1.00"/>
<path d="M826.49,238.60 A109,109 0 0 1 827.65,241.37 L815.58,246.22 A96,96 0 0 0 814.56,243.77 Z" fill="rgb(255, 111, 0)" fill-opacity="1.00"/>
<path d="M827.14,240.14 A109,109 0 0 1 828.26,242.93 L816.12,247.59 A96,96 0 0 0 815.14,245.13 Z" fill="rgb(255, 104, 0)" fill-opacity="1.00"/>
<path d="M827.77,241.69 A109,109 0 0 1 828.85,244.50 L816.64,248.98 A96,96 0 0 0 815.70,246.50 Z" fill="rgb(255, 97, 0)" fill-opacity="1.00"/>
<path d="M828.38,243.26 A109,109 0 0 1 829.41,246.08 L817.14,250.37 A96,96 0 0 0 816.23,247.88 Z" fill="rgb(255, 90, 0)" fill-opacity="1.00"/>
<path d="M828.97,244.83 A109,109 0 0 1 829.95,247.67 L817.61,251.76 A96,96 0 0 0 816.75,249.26 Z" fill="rgb(255, 83, 0)" fill-opacity="1.00"/>
<path d="M829.53,246.41 A109,109 0 0 1 830.47,249.27 L818.07,253.17 A96,96 0 0 0 817.24,250.65 Z" fill="rgb(255, 76, 0)" fill-opacity="1.00"/>
<path d="M830.06,248.00 A109,109 0 0 1 830.96,250.87 L818.50,254.58 A96,96 0 0 0 817.71,252.05 Z" fill="rgb(255, 69, 0)" fill-opacity="1.00"/>
<path d="M830.57,249.60 A109,109 0 0 1 831.43,252.48 L818.91,256.00 A96,96 0 0 0 818.16,253.46 Z" fill="rgb(255, 62, 0)" fill-opacity="1.00"/>
<path d="M831.06,251.20 A109,109 0 0 1 831.87,254.10 L819.30,257.43 A96,96 0 0 0 818.59,254.87 Z" fill="rgb(255, 55, 0)" fill-opacity="1.00"/>
<path d="M831.52,252.81 A109,109 0 0 1 832.29,255.72 L819.67,258.86 A96,96 0 0 0 818.99,256.29 Z" fill="rgb(255, 48, 0)" fill-opacity="1.00"/>
<path d="M831.96,254.43 A109,109 0 0 1 832.68,257.35 L820.01,260.29 A96,96 0 0 0 819.38,257.72 Z" fill="rgb(255, 41, 0)" fill-opacity="1.00"/>
<path d="M832.37,256.06 A109,109 0 0 1 833.04,258.99 L820.34,261.73 A96,96 0 0 0 819.74,259.15 Z" fill="rgb(255, 34, 0)" fill-opacity="1.00"/>
<path d="M832.75,257.69 A109,109 0 0 1 833.39,260.63 L820.64,263.18 A96,96 0 0 0 820.08,260.59 Z" fill="rgb(255, 29, 0)" fill-opacity="1.00"/>
<path d="M833.12,259.33 A109,109 0 0 1 833.70,262.28 L820.92,264.63 A96,96 0 0 0 820.40,262.03 Z" fill="rgb(255, 26, 0)" fill-opacity="1.00"/>
<path d="M833.45,260.97 A109,109 0 0 1 833.99,263.93 L821.17,266.09 A96,96 0 0 0 820.70,263.48 Z" fill="rgb(255, 24, 0)" fill-opacity="1.00"/>
<path d="M833.76,262.62 A109,109 0 0 1 834.26,265.59 L821.41,267.55 A96,96 0 0 0 820.97,264.93 Z" fill="rgb(255, 21, 0)" fill-opacity="1.00"/>
<line x1="637.67" y1="358.14" x2="628.55" y2="365.95" stroke="#fff" stroke-width="2.6"/>
<text x="620.96" y="372.46" transform="rotate(-130.60 620.96 372.46)" text-anchor="middle" dominant-baseline="central" font-family="Liberation Sans" font-size="14.3" fill="#fff" stroke="#fff" stroke-width="0.3">0</text>
<circle cx="623.57" cy="350.25" r="1.7" fill="#fff"/>
<circle cx="615.97" cy="337.09" r="1.7" fill="#fff"/>
<circle cx="610.04" cy="323.11" r="1.7" fill="#fff"/>
<circle cx="605.88" cy="308.49" r="1.7" fill="#fff"/>
<line x1="610.01" y1="292.88" x2="598.06" y2="293.99" stroke="#fff" stroke-width="2.6"/>
<text x="588.10" y="294.92" transform="rotate(-95.33 588.10 294.92)" text-anchor="middle" dominant-baseline="central" font-family="Liberation Sans" font-size="14.3" fill="#fff" stroke="#fff" stroke-width="0.3">500</text>
<circle cx="603.06" cy="278.30" r="1.7" fill="#fff"/>
<circle cx="604.44" cy="263.17" r="1.7" fill="#fff"/>
<circle cx="607.68" cy="248.32" r="1.7" fill="#fff"/>
<circle cx="612.71" cy="233.99" r="1.7" fill="#fff"/>
<line x1="625.10" y1="223.62" x2="614.70" y2="217.64" stroke="#fff" stroke-width="2.6"/>
<text x="606.04" y="212.65" transform="rotate(-60.07 606.04 212.65)" text-anchor="middle" dominant-baseline="central" font-family="Liberation Sans" font-size="14.3" fill="#fff" stroke="#fff" stroke-width="0.3">1000</text>
<circle cx="627.85" cy="207.71" r="1.7" fill="#fff"/>
<circle cx="637.72" cy="196.15" r="1.7" fill="#fff"/>
<circle cx="648.93" cy="185.90" r="1.7" fill="#fff"/>
<circle cx="661.31" cy="177.10" r="1.7" fill="#fff"/>
<line x1="677.41" y1="175.79" x2="672.38" y2="164.90" stroke="#fff" stroke-width="2.6"/>
<text x="668.19" y="155.82" transform="rotate(-24.81 668.19 155.82)" text-anchor="middle" dominant-baseline="central" font-family="Liberation Sans" font-size="14.3" fill="#fff" stroke="#fff" stroke-width="0.3">1500</text>
<circle cx="688.85" cy="164.38" r="1.7" fill="#fff"/>
<circle cx="703.57" cy="160.65" r="1.7" fill="#fff"/>
<circle cx="718.65" cy="158.75" r="1.7" fill="#fff"/>
<circle cx="733.84" cy="158.72" r="1.7" fill="#fff"/>
<line x1="747.74" y1="166.94" x2="749.92" y2="155.14" stroke="#fff" stroke-width="2.6"/>
<text x="751.74" y="145.31" transform="rotate(10.46 751.74 145.31)" text-anchor="middle" dominant-baseline="central" font-family="Liberation Sans" font-size="14.3" fill="#fff" stroke="#fff" stroke-width="0.3">2000</text>
<circle cx="763.66" cy="164.22" r="1.7" fill="#fff"/>
<circle cx="777.84" cy="169.68" r="1.7" fill="#fff"/>
<circle cx="791.25" cy="176.83" r="1.7" fill="#fff"/>
<circle cx="803.67" cy="185.58" r="1.7" fill="#fff"/>
<line x1="810.27" y1="200.32" x2="818.86" y2="191.94" stroke="#fff" stroke-width="2.6"/>
<text x="826.02" y="184.96" transform="rotate(45.72 826.02 184.96)" text-anchor="middle" dominant-baseline="central" font-family="Liberation Sans" font-size="14.3" fill="#fff" stroke="#fff" stroke-width="0.3">2500</text>
<circle cx="824.84" cy="207.29" r="1.7" fill="#fff"/>
<circle cx="833.27" cy="219.93" r="1.7" fill="#fff"/>
<circle cx="840.08" cy="233.51" r="1.7" fill="#fff"/>
<circle cx="845.18" cy="247.83" r="1.7" fill="#fff"/>
<line x1="842.06" y1="263.68" x2="853.91" y2="261.80" stroke="#fff" stroke-width="2.6"/>
<text x="863.78" y="260.23" transform="rotate(80.99 863.78 260.23)" text-anchor="middle" dominant-baseline="central" font-family="Liberation Sans" font-size="14.3" fill="#fff" stroke="#fff" stroke-width="0.3">3000</text>
<g clip-path="url(#faceclip)"><g filter="url(#blur)" opacity="0.75"><path d="M726.5,282 L877.6,282 L877.6,357.5 L723,357.5 L691.5,388.8 L620.4,388.8 Z" fill="none" stroke="#15161e" stroke-width="9"/><circle cx="726.5" cy="283" r="46" fill="none" stroke="#15161e" stroke-width="6"/></g></g>
<polygon points="598.2,260.8 661.3,271.4 661.0,274.0 597.4,266.6" fill="#f00a0a"/>
<circle cx="597.8" cy="263.7" r="2.9" fill="#f00a0a"/>
<polygon points="647.3,270.7 683.8,270.1 682.1,281.5" fill="url(#wedge)"/>
<path d="M726.5,282 L877.6,282 L877.6,357.5 L723,357.5 L691.5,388.8 L620.4,388.8 Z" fill="#e6eafb" stroke="#a2a6c4" stroke-width="1.4"/>
<circle cx="726.5" cy="283" r="44.5" fill="#e6eafb" stroke="#c2c6de" stroke-width="1.2"/>
<path d="M726.5,282.5 L876.9,282.7 L876.9,356.8 L722.7,356.8 L691.2,388.1 L622,388.1 Z" fill="#e6eafb"/>
<g fill="#111"><circle cx="17" cy="811" r="3"/><path d="M12.2,820.5 C12.2,815.5 21.8,815.5 21.8,820.5 Z"/><rect x="20" y="808.3" width="7" height="1.6"/><rect x="21" y="811.3" width="6" height="1.6"/><rect x="21" y="814.3" width="6" height="1.6"/></g>
<g stroke="#e8ffe8" fill="none" stroke-width="1.3"><circle cx="546" cy="815" r="5.2"/><line x1="546" y1="815" x2="546" y2="811.5"/><line x1="544" y1="807.8" x2="548" y2="807.8"/></g>
<circle cx="571" cy="814" r="5.5" fill="#8e8e8e"/>
<g fill="#111"><rect x="595.5" y="811" width="8.5" height="8.5" rx="1"/><rect x="597.5" y="808.3" width="4.5" height="1.6"/><rect x="598.8" y="809.5" width="2" height="2"/><rect x="592.5" y="812.5" width="1.6" height="5"/><rect x="593.5" y="814" width="2.5" height="2"/><path d="M603.5,813 L605.5,811.5 H606.8 V818 H605.5 L603.5,816.8 Z"/></g>
<g transform="translate(872,804)"><path d="M4,13 C5,7 13,6 16,11" fill="none" stroke="#333" stroke-width="1.4"/><polygon points="17,8 17,13 12.5,12" fill="#333"/><circle cx="10" cy="14" r="1" fill="#333"/></g>
<g transform="translate(898,804)"><rect x="3.5" y="9.5" width="9" height="7" fill="none" stroke="#333" stroke-width="1.4"/><path d="M10.5,9.5 V6.5 a3,3 0 0 1 6,0 V8" fill="none" stroke="#333" stroke-width="1.4"/><circle cx="8" cy="13" r="1" fill="#333"/></g>
<g transform="translate(923,804)"><circle cx="10" cy="10" r="7" fill="none" stroke="#d8ffd8" stroke-width="1.4"/><path d="M7,6.5 H13 M10,6.5 V14" stroke="#d8ffd8" stroke-width="1.6"/></g>
<g transform="translate(948,804)"><circle cx="10" cy="10" r="6.6" fill="none" stroke="#333" stroke-width="1.5"/><path d="M3.8,13 H16.2 A6.8,6.8 0 0 1 3.8,13 Z" fill="#333"/><path d="M10.5,11 L6,7.5" stroke="#333" stroke-width="1.7"/><circle cx="10.5" cy="11" r="1.4" fill="#333"/><path d="M12.5,6 L13.5,5.6 M14.5,8.5 L15.3,8.2" stroke="#333" stroke-width="1"/></g>
<g transform="translate(973,804)"><path d="M6,4 H14 L10,10 Z M10,10 L6,17 M10,10 L14,17 M10,10 V17" fill="#333" stroke="#333" stroke-width="1.4"/></g>
<g transform="translate(998,804)"><path d="M7.5,3 H12.5 V10 H16.5 L10,17 L3.5,10 H7.5 Z" fill="#fff"/></g>
<g transform="translate(1024,804)"><polygon points="7,3.5 13,3.5 16.5,7 16.5,13 13,16.5 7,16.5 3.5,13 3.5,7" fill="none" stroke="#333" stroke-width="1.4"/><path d="M10,6.5 V11 M10,12.5 V14" stroke="#333" stroke-width="1.6"/></g>
<g transform="translate(1049,804)"><path d="M10,4 L17,16 H3 Z M10,8.5 L13.5,14 H6.5 Z" fill="none" stroke="#333" stroke-width="1.4"/></g>
<g transform="translate(1074,804)"><path d="M3,9 H6 L8,11 H13 L17,8 L14,14 H6 Z" fill="none" stroke="#333" stroke-width="1.4"/><path d="M6,7 H9" fill="none" stroke="#333" stroke-width="1.4"/><circle cx="17" cy="13" r="1" fill="#333"/></g>
<g transform="translate(1099,804)"><path d="M10,3 V12 M10,5 H12.5 M10,7.5 H12.5" fill="none" stroke="#333" stroke-width="1.4"/><circle cx="10" cy="13" r="1.6" fill="#333"/><path d="M3,15.5 q2,-1.5 3.5,0 t3.5,0 t3.5,0 t3.5,0 M3,17.5 q2,-1.5 3.5,0 t3.5,0 t3.5,0 t3.5,0" fill="none" stroke="#333" stroke-width="1.4" stroke-width="1"/></g>
<g transform="translate(1124,804)"><path d="M8,4 C5,9 4,11 4,13 a4,4 0 0 0 8,0 C12,11 11,9 8,4 Z" fill="none" stroke="#333" stroke-width="1.4"/><path d="M15,5 V11 M15,13 V14.5" stroke="#333" stroke-width="1.6"/></g>
<g transform="translate(1152,804)"><path d="M5.5,11.5 A2.6,2.6 0 0 1 5.2,6.6 A4.2,4.2 0 0 1 13.2,5.8 A2.9,2.9 0 0 1 14.8,11.5 Z" fill="none" stroke="#fff" stroke-width="1.3"/><path d="M3,13.8 H15 A1.5,1.5 0 1 1 13.6,15.8 M3,16.2 H9.5" fill="none" stroke="#fff" stroke-width="1.3"/></g>
<g transform="translate(1177,804)"><rect x="7" y="3" width="4" height="10" rx="2" fill="#333"/><circle cx="9" cy="14" r="3" fill="#333"/><path d="M14.5,5 V11 M14.5,13 V14.5" stroke="#333" stroke-width="1.6"/></g>
<g transform="translate(1202,804)"><rect x="3" y="7" width="14" height="9" fill="#fff"/><rect x="5" y="9" width="10" height="4" fill="#f7931e"/><rect x="11" y="4" width="4" height="3" fill="#fff"/></g>
<g transform="translate(1227,804)"><rect x="3" y="3" width="14" height="1.6" fill="#333"/><rect x="3" y="15.4" width="14" height="1.6" fill="#333"/><g fill="#333"><rect x="4" y="6" width="1.6" height="1.6"/><rect x="7" y="6" width="1.6" height="1.6"/><rect x="10" y="6" width="1.6" height="1.6"/><rect x="4" y="9" width="1.6" height="1.6"/><rect x="7" y="9" width="1.6" height="1.6"/><rect x="10" y="9" width="1.6" height="1.6"/><rect x="4" y="12" width="1.6" height="1.6"/><rect x="7" y="12" width="1.6" height="1.6"/><rect x="10" y="12" width="1.6" height="1.6"/></g></g>
<g transform="translate(1255,804)"><path d="M3,11 H6 L12,7 M13,11 H17" fill="none" stroke="#333" stroke-width="1.5"/><circle cx="6" cy="11" r="1.5" fill="#333"/><circle cx="14" cy="11" r="1.8" fill="none" stroke="#333" stroke-width="1.3"/></g>
<g transform="translate(1280,804)"><path d="M5,7 H11 V5.5 H8 M11,7 H13 L15,9 H17 V14 H15 L13,15.5 H7 L5,13.5 V11 H3 V9 H5 Z" fill="#333" stroke="#333" stroke-width="1"/></g>
<g transform="translate(1305,804)"><path d="M6,3 q-1.5,1.5 0,3 t0,3 M10,3 q-1.5,1.5 0,3 t0,3 M14,3 q-1.5,1.5 0,3 t0,3" fill="none" stroke="#333" stroke-width="1.2"/><rect x="3" y="10.5" width="14" height="6" rx="1" fill="none" stroke="#333" stroke-width="1.4"/><path d="M6,10.5 V16.5 M9,10.5 V16.5 M12,10.5 V16.5 M15,10.5 V16.5" stroke="#333" stroke-width="1"/></g>
<g transform="translate(1330,804)"><path d="M4,8 H7 L11,4.5 V15.5 L7,12 H4 Z" fill="#fff"/><path d="M13,6.5 a5,5 0 0 1 0,7 M15,4.5 a8,8 0 0 1 0,11" fill="none" stroke="#fff" stroke-width="1.5"/></g>
<g transform="translate(21,54)"><path d="M-7,0 L0,-7 L7,0 M-5,-2 V6 H-1.5 V1.5 H1.5 V6 H5 V-2" fill="none" stroke="#3a3a3a" stroke-width="1.6" stroke-width="1.8"/></g>
<g transform="translate(21,90)"><rect x="-5.5" y="-2" width="11" height="9" fill="none" stroke="#3a3a3a" stroke-width="1.6"/><path d="M-3.5,-2 V-4.5 a3.5,3.5 0 0 1 7,0 V-2" fill="none" stroke="#3a3a3a" stroke-width="1.6"/><circle cx="0" cy="2.5" r="1.1" fill="#3a3a3a"/></g>
<g transform="translate(21,126)"><path d="M-3.5,-9 V-4 M3.5,-9 V-4" stroke="#3a3a3a" stroke-width="2"/><path d="M-6,-4 H6 V1 a6,6 0 0 1 -4,5 V9 H-2 V6 a6,6 0 0 1 -4,-5 Z" fill="#3a3a3a"/></g>
<g transform="translate(21,162)"><circle cx="0" cy="0" r="6.8" fill="none" stroke="#3a3a3a" stroke-width="1.6"/><path d="M-6.3,3 H6.3 A7,7 0 0 1 -6.3,3 Z" fill="#3a3a3a"/><path d="M0,1 L1.6,-4.5" stroke="#3a3a3a" stroke-width="1.8"/><circle cx="0" cy="1" r="1.5" fill="#3a3a3a"/><path d="M-4.3,-1.8 L-3.3,-1.4 M-2.3,-4.3 L-1.8,-3.5 M3.5,-1.5 L4.5,-1.9" stroke="#3a3a3a" stroke-width="1.1"/></g>
<g transform="translate(21,198)"><rect x="-8" y="-4" width="16" height="8" rx="4" fill="#3a3a3a"/><circle cx="4" cy="0" r="2.5" fill="#fff"/></g>
<g transform="translate(21,234)"><circle cx="0" cy="1.5" r="6.3" fill="none" stroke="#3a3a3a" stroke-width="1.6"/><path d="M-2.5,-7.5 H2.5 M0,-7.5 V-5 M0,1.5 L2,-1.5" fill="none" stroke="#3a3a3a" stroke-width="1.6"/></g>
<g transform="translate(21,270)"><rect x="-6" y="-6" width="12" height="12" fill="#3a3a3a"/><path d="M-8,-4 H8 M-8,-1.3 H8 M-8,1.3 H8 M-8,4 H8" stroke="#3a3a3a" stroke-width="1"/><rect x="-1" y="2" width="5" height="2" fill="#fff"/></g>
<g transform="translate(21,306)"><path d="M-7,-4 a5,5 0 0 0 6,5 L6,7.5 a1.6,1.6 0 0 0 2,-2 L1.5,-1 a5,5 0 0 0 -5,-6 L-1,-4.5 L-2.5,-2 L-5,-1.5 Z" fill="#3a3a3a"/></g>
<g transform="translate(21,342)"><path d="M-7.5,-7 V7 H8" fill="none" stroke="#3a3a3a" stroke-width="1.8"/><rect x="-5" y="-3" width="2.4" height="10" fill="#3a3a3a"/><rect x="-1.5" y="-6" width="2.4" height="13" fill="#3a3a3a"/><rect x="2" y="0" width="2.4" height="7" fill="#3a3a3a"/><rect x="5.3" y="3" width="2.4" height="4" fill="#3a3a3a"/></g>
<g transform="translate(21,378)"><rect x="-7" y="-6" width="4" height="4" fill="none" stroke="#3a3a3a" stroke-width="1.6" stroke-width="1.3"/><path d="M-1,-4 H8 M-7,3 L-5,5.5 L-2,1 M0,4 H8" fill="none" stroke="#3a3a3a" stroke-width="1.6"/></g>
<g transform="translate(21,414)"><rect x="-7.5" y="-3" width="15" height="10" fill="none" stroke="#3a3a3a" stroke-width="1.6"/><path d="M-3,-3 V-6 H3 V-3 M-7.5,1.5 H7.5 M-4,0 V3 M4,0 V3" fill="none" stroke="#3a3a3a" stroke-width="1.6"/></g>
<g transform="translate(21,450)"><path d="M-7,-7 H4 L7,-4 V7 H-7 Z" fill="#3a3a3a"/><rect x="-4.5" y="-6" width="7" height="4" fill="#fff"/><circle cx="0" cy="3" r="2.3" fill="#fff"/></g>
<g transform="translate(21,486)"><path d="M-8,-5 L-1,-4 V7 L-8,6 Z M1,-4 L8,-6 V6 L1,7 Z" fill="#3a3a3a"/><path d="M3,-7 V1 L4.5,-0.5 L6,1 V-7" fill="#fff" stroke="#3a3a3a" stroke-width="0.8"/></g>
<g transform="translate(21,522)"><rect x="-7" y="-5.5" width="14" height="11.5" fill="none" stroke="#3a3a3a" stroke-width="1.6"/><path d="M-7.8,-5 H7.8" fill="none" stroke="#3a3a3a" stroke-width="1.6" stroke-width="2.2"/></g>
<g transform="translate(21,558)"><circle cx="-1.5" cy="-1.5" r="5" fill="none" stroke="#3a3a3a" stroke-width="2"/><line x1="2" y1="2" x2="7" y2="7" stroke="#3a3a3a" stroke-width="2.4"/></g>
<path d="M13,769 H27 M13,775 H24 M13,781 H27 M32,770.5 L27.5,775 L32,779.5" fill="none" stroke="#3a3a3a" stroke-width="1.8"/>
<path d="M216.5,58 L223.5,51.5 L230.5,58 M218.5,56 V64 H222 V59.5 H225 V64 H228.5 V56" fill="none" stroke="#333" stroke-width="1.8"/>
<g transform="translate(319,57.5)"><circle cx="0" cy="0" r="6.8" fill="none" stroke="#333" stroke-width="1.6"/><path d="M-6.3,3 H6.3 A7,7 0 0 1 -6.3,3 Z" fill="#333"/><path d="M0,1 L1.6,-4.5" stroke="#333" stroke-width="1.8"/><circle cx="0" cy="1" r="1.5" fill="#333"/><path d="M-4.3,-1.8 L-3.3,-1.4 M-2.3,-4.3 L-1.8,-3.5 M3.5,-1.5 L4.5,-1.9" stroke="#333" stroke-width="1.1"/></g>
</svg>
<span class="t" style="left:9.3px;top:11.0px;font-size:16px;color:#fff6cc;transform:scaleX(0.881);transform-origin:0 0;">WINEEM5 - JCB SERVICE TOOL - 9.0</span>
<span class="t" style="left:35.3px;top:48.8px;font-size:12px;color:#464646;transform:scaleX(0.931);transform-origin:0 0;">HOME</span>
<span class="t" style="left:35.3px;top:84.8px;font-size:12px;color:#464646;transform:scaleX(0.871);transform-origin:0 0;">UNLOCK FEATURES</span>
<span class="t" style="left:35.3px;top:120.8px;font-size:12px;color:#464646;transform:scaleX(0.919);transform-origin:0 0;">CONNECTION</span>
<span class="t" style="left:35.3px;top:156.8px;font-size:12px;color:#464646;transform:scaleX(0.862);transform-origin:0 0;">SYSTEM STATUS</span>
<span class="t" style="left:35.3px;top:192.8px;font-size:12px;color:#464646;transform:scaleX(0.883);transform-origin:0 0;">SYSTEM CONTROL</span>
<span class="t" style="left:35.3px;top:228.8px;font-size:12px;color:#464646;transform:scaleX(0.910);transform-origin:0 0;">MEASURING</span>
<span class="t" style="left:35.3px;top:264.8px;font-size:12px;color:#464646;transform:scaleX(0.837);transform-origin:0 0;">ECU</span>
<span class="t" style="left:35.3px;top:300.8px;font-size:12px;color:#464646;transform:scaleX(0.903);transform-origin:0 0;">SERVICE &amp; PRODUCTION</span>
<span class="t" style="left:35.3px;top:336.8px;font-size:12px;color:#464646;transform:scaleX(0.885);transform-origin:0 0;">ENGINE LOGS</span>
<span class="t" style="left:35.3px;top:372.8px;font-size:12px;color:#464646;transform:scaleX(0.858);transform-origin:0 0;">ENGINE TESTS</span>
<span class="t" style="left:35.3px;top:408.8px;font-size:12px;color:#464646;transform:scaleX(0.859);transform-origin:0 0;">UTILITIES</span>
<span class="t" style="left:35.3px;top:444.8px;font-size:12px;color:#464646;transform:scaleX(0.892);transform-origin:0 0;">SAVE ALL ENGINE LOGS</span>
<span class="t" style="left:35.3px;top:480.8px;font-size:12px;color:#464646;transform:scaleX(0.898);transform-origin:0 0;">SHOW TROUBLESHOOT</span>
<span class="t" style="left:35.3px;top:516.8px;font-size:12px;color:#464646;transform:scaleX(0.928);transform-origin:0 0;">WINEEM5</span>
<span class="t" style="left:35.3px;top:552.8px;font-size:12px;color:#464646;transform:scaleX(0.848);transform-origin:0 0;">SEARCH FEATURES</span>
<span class="t" style="left:238.1px;top:51.1px;font-size:14px;color:#333;transform:scaleX(0.991);transform-origin:0 0;">Home</span>
<span class="t" style="left:333.3px;top:51.1px;font-size:14px;color:#333;transform:scaleX(0.957);transform-origin:0 0;">Engine status</span>
<span class="t" style="left:215.5px;top:91.8px;font-size:12px;color:#555;transform:scaleX(0.887);transform-origin:0 0;">ENGINE</span>
<span class="t" style="left:562.5px;top:91.8px;font-size:12px;color:#555;transform:scaleX(0.863);transform-origin:0 0;">ENGINE SPEED</span>
<span class="t" style="left:562.5px;top:429.8px;font-size:12px;color:#555;transform:scaleX(0.898);transform-origin:0 0;">DEGRADATIONS</span>
<span class="t" style="left:908.5px;top:91.8px;font-size:12px;color:#555;transform:scaleX(0.888);transform-origin:0 0;">ENGINE TORQUE</span>
<span class="t" style="left:908.5px;top:260.8px;font-size:12px;color:#555;transform:scaleX(0.846);transform-origin:0 0;">RAIL PRESSURE</span>
<span class="t" style="left:908.5px;top:429.8px;font-size:12px;color:#555;transform:scaleX(0.905);transform-origin:0 0;">ENGINE LOAD</span>
<span class="t" style="left:908.5px;top:599.6px;font-size:12px;color:#555;transform:scaleX(0.904);transform-origin:0 0;">FUEL INJECTION QUANTITY</span>
<span class="t" style="left:1366.5px;top:91.8px;font-size:12px;color:#555;">D/I</span>
<span class="t" style="left:1404.7px;top:91.8px;font-size:12px;color:#555;">D/O</span>
<span class="t" style="left:216.3px;top:116.8px;font-size:12px;color:#111;transform:scaleX(0.917);transform-origin:0 0;-webkit-text-stroke:0.45px #111;">ENGINE CONTROL</span>
<span class="t" style="left:216.3px;top:135.5px;font-size:12px;color:#1e1e1e;">Engine speed governor mode</span>
<span class="m" style="left:478.8px;top:135.3px;font-size:11.5px;font-weight:700;color:#111;transform:scaleX(0.957);transform-origin:100% 0;">Mode 1</span>
<span class="t" style="left:216.3px;top:151.5px;font-size:12px;color:#1e1e1e;">Engine speed setpoint source</span>
<span class="m" style="left:465.0px;top:151.3px;font-size:11.5px;font-weight:700;color:#111;transform:scaleX(0.957);transform-origin:100% 0;">TSC1 (0)</span>
<span class="t" style="left:216.3px;top:167.5px;font-size:12px;color:#1e1e1e;">Engine speed setpoint (TSC1)</span>
<span class="m" style="left:513.3px;top:167.3px;font-size:11.5px;font-weight:700;color:#111;transform:scaleX(0.957);transform-origin:100% 0;">0</span>
<span class="m" style="left:525.2px;top:167.3px;font-size:11.5px;font-weight:700;color:#111;transform:scaleX(0.957);transform-origin:0 0;">rpm</span>
<span class="t" style="left:216.3px;top:183.5px;font-size:12px;color:#1e1e1e;">Engine speed setpoint (acc. pedal)</span>
<span class="m" style="left:513.3px;top:183.3px;font-size:11.5px;font-weight:700;color:#111;transform:scaleX(0.957);transform-origin:100% 0;">0</span>
<span class="m" style="left:525.2px;top:183.3px;font-size:11.5px;font-weight:700;color:#111;transform:scaleX(0.957);transform-origin:0 0;">rpm</span>
<span class="t" style="left:216.3px;top:199.5px;font-size:12px;color:#1e1e1e;">Accelerator pedal position</span>
<span class="m" style="left:499.5px;top:199.3px;font-size:11.5px;font-weight:700;color:#111;transform:scaleX(0.957);transform-origin:100% 0;">N/A</span>
<span class="m" style="left:525.2px;top:199.3px;font-size:11.5px;font-weight:700;color:#111;transform:scaleX(0.957);transform-origin:0 0;">%</span>
<span class="t" style="left:216.3px;top:215.5px;font-size:12px;color:#1e1e1e;">Engine torque setpoint</span>
<span class="m" style="left:499.5px;top:215.3px;font-size:11.5px;font-weight:700;color:#111;transform:scaleX(0.957);transform-origin:100% 0;">N/A</span>
<span class="m" style="left:525.2px;top:215.3px;font-size:11.5px;font-weight:700;color:#111;transform:scaleX(0.957);transform-origin:0 0;">Nm</span>
<span class="t" style="left:216.3px;top:231.5px;font-size:12px;color:#1e1e1e;">Engine torque curve</span>
<span class="m" style="left:513.3px;top:231.3px;font-size:11.5px;font-weight:700;color:#111;transform:scaleX(0.957);transform-origin:100% 0;">0</span>
<span class="t" style="left:216.3px;top:247.5px;font-size:12px;color:#1e1e1e;">Engine droop</span>
<span class="m" style="left:513.3px;top:247.3px;font-size:11.5px;font-weight:700;color:#111;transform:scaleX(0.957);transform-origin:100% 0;">0</span>
<span class="m" style="left:525.2px;top:247.3px;font-size:11.5px;font-weight:700;color:#111;transform:scaleX(0.957);transform-origin:0 0;">%</span>
<span class="t" style="left:216.3px;top:275.4px;font-size:12px;color:#111;transform:scaleX(0.899);transform-origin:0 0;-webkit-text-stroke:0.45px #111;">ENGINE STATE</span>
<span class="t" style="left:216.3px;top:295.1px;font-size:12px;color:#1e1e1e;">Engine main state</span>
<span class="m" style="left:471.9px;top:294.9px;font-size:11.5px;font-weight:700;color:#111;transform:scaleX(0.957);transform-origin:100% 0;">Running</span>
<span class="t" style="left:216.3px;top:311.1px;font-size:12px;color:#1e1e1e;">Engine operating mode</span>
<span class="m" style="left:478.8px;top:310.9px;font-size:11.5px;font-weight:700;color:#111;transform:scaleX(0.957);transform-origin:100% 0;">Normal</span>
<span class="t" style="left:216.3px;top:327.1px;font-size:12px;color:#1e1e1e;">Engine dynamic state</span>
<span class="m" style="left:478.8px;top:326.9px;font-size:11.5px;font-weight:700;color:#111;transform:scaleX(0.957);transform-origin:100% 0;">Static</span>
<span class="t" style="left:216.3px;top:343.1px;font-size:12px;color:#1e1e1e;">Engine load</span>
<span class="m" style="left:506.4px;top:342.9px;font-size:11.5px;font-weight:700;color:#111;transform:scaleX(0.957);transform-origin:100% 0;">81</span>
<span class="m" style="left:525.2px;top:342.9px;font-size:11.5px;font-weight:700;color:#111;transform:scaleX(0.957);transform-origin:0 0;">%</span>
<span class="t" style="left:216.3px;top:359.1px;font-size:12px;color:#1e1e1e;">Engine oil level</span>
<span class="m" style="left:506.4px;top:358.9px;font-size:11.5px;font-weight:700;color:#111;transform:scaleX(0.957);transform-origin:100% 0;">52</span>
<span class="m" style="left:525.2px;top:358.9px;font-size:11.5px;font-weight:700;color:#111;transform:scaleX(0.957);transform-origin:0 0;">%</span>
<span class="t" style="left:216.3px;top:375.1px;font-size:12px;color:#1e1e1e;">Lambda value</span>
<span class="m" style="left:492.6px;top:374.9px;font-size:11.5px;font-weight:700;color:#111;transform:scaleX(0.957);transform-origin:100% 0;">2.26</span>
<span class="t" style="left:216.3px;top:391.1px;font-size:12px;color:#1e1e1e;">Water in fuel status</span>
<span class="m" style="left:409.8px;top:390.9px;font-size:11.5px;font-weight:700;color:#111;transform:scaleX(0.957);transform-origin:100% 0;">No water in fuel</span>
<span class="t" style="left:216.3px;top:407.1px;font-size:12px;color:#1e1e1e;">Battery voltage</span>
<span class="m" style="left:485.7px;top:406.9px;font-size:11.5px;font-weight:700;color:#111;transform:scaleX(0.957);transform-origin:100% 0;">13.25</span>
<span class="m" style="left:525.2px;top:406.9px;font-size:11.5px;font-weight:700;color:#111;transform:scaleX(0.957);transform-origin:0 0;">V</span>
<span class="t" style="left:216.3px;top:423.1px;font-size:12px;color:#1e1e1e;">Remaining engine low idle time</span>
<span class="m" style="left:423.6px;top:422.9px;font-size:11.5px;font-weight:700;color:#111;transform:scaleX(0.957);transform-origin:100% 0;">18 h 0 min 0 s</span>
<span class="t" style="left:216.3px;top:439.1px;font-size:12px;color:#1e1e1e;">Average fuel consumption</span>
<span class="m" style="left:513.3px;top:438.9px;font-size:11.5px;font-weight:700;color:#111;transform:scaleX(0.957);transform-origin:100% 0;">7</span>
<span class="m" style="left:525.2px;top:438.9px;font-size:11.5px;font-weight:700;color:#111;transform:scaleX(0.957);transform-origin:0 0;">l/h</span>
<span class="t" style="left:216.3px;top:455.1px;font-size:12px;color:#1e1e1e;">Engine start status</span>
<span class="t" style="left:216.3px;top:483.8px;font-size:12px;color:#111;transform:scaleX(0.882);transform-origin:0 0;-webkit-text-stroke:0.45px #111;">TEMPERATURES</span>
<span class="t" style="left:216.3px;top:503.0px;font-size:12px;color:#1e1e1e;">Ambient temperature</span>
<span class="m" style="left:513.3px;top:502.9px;font-size:11.5px;font-weight:700;color:#111;transform:scaleX(0.957);transform-origin:100% 0;">7</span>
<span class="m" style="left:525.2px;top:502.9px;font-size:11.5px;font-weight:700;color:#111;transform:scaleX(0.957);transform-origin:0 0;">°C</span>
<span class="t" style="left:216.3px;top:518.9px;font-size:12px;color:#1e1e1e;">ECU temperature</span>
<span class="m" style="left:506.4px;top:518.8px;font-size:11.5px;font-weight:700;color:#111;transform:scaleX(0.957);transform-origin:100% 0;">59</span>
<span class="m" style="left:525.2px;top:518.8px;font-size:11.5px;font-weight:700;color:#111;transform:scaleX(0.957);transform-origin:0 0;">°C</span>
<span class="t" style="left:216.3px;top:534.8px;font-size:12px;color:#1e1e1e;">Engine oil temperature</span>
<span class="m" style="left:506.4px;top:534.6px;font-size:11.5px;font-weight:700;color:#111;transform:scaleX(0.957);transform-origin:100% 0;">60</span>
<span class="m" style="left:525.2px;top:534.6px;font-size:11.5px;font-weight:700;color:#111;transform:scaleX(0.957);transform-origin:0 0;">°C</span>
<span class="t" style="left:216.3px;top:550.7px;font-size:12px;color:#1e1e1e;">Coolant temperature</span>
<span class="m" style="left:506.4px;top:550.6px;font-size:11.5px;font-weight:700;color:#111;transform:scaleX(0.957);transform-origin:100% 0;">75</span>
<span class="m" style="left:525.2px;top:550.6px;font-size:11.5px;font-weight:700;color:#111;transform:scaleX(0.957);transform-origin:0 0;">°C</span>
<span class="t" style="left:216.3px;top:566.6px;font-size:12px;color:#1e1e1e;">Engine boost temperature</span>
<span class="m" style="left:492.6px;top:566.5px;font-size:11.5px;font-weight:700;color:#111;transform:scaleX(0.957);transform-origin:100% 0;">13.7</span>
<span class="m" style="left:525.2px;top:566.5px;font-size:11.5px;font-weight:700;color:#111;transform:scaleX(0.957);transform-origin:0 0;">°C</span>
<span class="t" style="left:216.3px;top:582.5px;font-size:12px;color:#1e1e1e;">Engine intake temperature</span>
<span class="m" style="left:499.5px;top:582.4px;font-size:11.5px;font-weight:700;color:#111;transform:scaleX(0.957);transform-origin:100% 0;">N/A</span>
<span class="m" style="left:525.2px;top:582.4px;font-size:11.5px;font-weight:700;color:#111;transform:scaleX(0.957);transform-origin:0 0;">°C</span>
<span class="t" style="left:216.3px;top:598.4px;font-size:12px;color:#1e1e1e;">Fuel temperature</span>
<span class="m" style="left:506.4px;top:598.2px;font-size:11.5px;font-weight:700;color:#111;transform:scaleX(0.957);transform-origin:100% 0;">67</span>
<span class="m" style="left:525.2px;top:598.2px;font-size:11.5px;font-weight:700;color:#111;transform:scaleX(0.957);transform-origin:0 0;">°C</span>
<span class="t" style="left:216.3px;top:626.8px;font-size:12px;color:#111;transform:scaleX(0.831);transform-origin:0 0;-webkit-text-stroke:0.45px #111;">PRESSURES</span>
<span class="t" style="left:216.3px;top:645.8px;font-size:12px;color:#1e1e1e;">Ambient pressure</span>
<span class="m" style="left:499.5px;top:645.6px;font-size:11.5px;font-weight:700;color:#111;transform:scaleX(0.957);transform-origin:100% 0;">100</span>
<span class="m" style="left:525.2px;top:645.6px;font-size:11.5px;font-weight:700;color:#111;transform:scaleX(0.957);transform-origin:0 0;">kPa</span>
<span class="t" style="left:216.3px;top:661.8px;font-size:12px;color:#1e1e1e;">Engine oil pressure</span>
<span class="m" style="left:499.5px;top:661.6px;font-size:11.5px;font-weight:700;color:#111;transform:scaleX(0.957);transform-origin:100% 0;">148</span>
<span class="m" style="left:525.2px;top:661.6px;font-size:11.5px;font-weight:700;color:#111;transform:scaleX(0.957);transform-origin:0 0;">kPa</span>
<span class="t" style="left:216.3px;top:677.8px;font-size:12px;color:#1e1e1e;">Engine coolant pressure</span>
<span class="m" style="left:506.4px;top:677.6px;font-size:11.5px;font-weight:700;color:#111;transform:scaleX(0.957);transform-origin:100% 0;">96</span>
<span class="m" style="left:525.2px;top:677.6px;font-size:11.5px;font-weight:700;color:#111;transform:scaleX(0.957);transform-origin:0 0;">kPa</span>
<span class="t" style="left:216.3px;top:693.8px;font-size:12px;color:#1e1e1e;">Engine boost pressure (rel)</span>
<span class="m" style="left:499.5px;top:693.6px;font-size:11.5px;font-weight:700;color:#111;transform:scaleX(0.957);transform-origin:100% 0;">9.1</span>
<span class="m" style="left:525.2px;top:693.6px;font-size:11.5px;font-weight:700;color:#111;transform:scaleX(0.957);transform-origin:0 0;">kPa</span>
<span class="t" style="left:216.3px;top:709.8px;font-size:12px;color:#1e1e1e;">Fuel pressure (abs)</span>
<span class="m" style="left:513.3px;top:709.6px;font-size:11.5px;font-weight:700;color:#111;transform:scaleX(0.957);transform-origin:100% 0;">0</span>
<span class="m" style="left:525.2px;top:709.6px;font-size:11.5px;font-weight:700;color:#111;transform:scaleX(0.957);transform-origin:0 0;">kPa</span>
<span class="t" style="left:216.3px;top:725.8px;font-size:12px;color:#1e1e1e;">Fuel pre-filter pressure (abs)</span>
<span class="m" style="left:506.4px;top:725.6px;font-size:11.5px;font-weight:700;color:#111;transform:scaleX(0.957);transform-origin:100% 0;">88</span>
<span class="m" style="left:525.2px;top:725.6px;font-size:11.5px;font-weight:700;color:#111;transform:scaleX(0.957);transform-origin:0 0;">kPa</span>
<span class="t" style="left:562.3px;top:455.5px;font-size:12px;color:#1e1e1e;">Degradation level</span>
<span class="m" style="left:878.9px;top:455.3px;font-size:11.5px;font-weight:700;color:#111;transform:scaleX(0.957);transform-origin:100% 0;">1</span>
<span class="t" style="left:562.3px;top:471.5px;font-size:12px;color:#1e1e1e;">Aftertreatment degradation level</span>
<span class="m" style="left:878.9px;top:471.3px;font-size:11.5px;font-weight:700;color:#111;transform:scaleX(0.957);transform-origin:100% 0;">2</span>
<span class="t" style="left:562.3px;top:487.5px;font-size:12px;color:#1e1e1e;">Engine speed limiter active</span>
<span class="m" style="left:872.0px;top:487.3px;font-size:11.5px;font-weight:700;color:#111;transform:scaleX(0.957);transform-origin:100% 0;">No</span>
<span class="t" style="left:562.3px;top:503.5px;font-size:12px;color:#1e1e1e;">Fuel injection quantity limiter active</span>
<span class="m" style="left:872.0px;top:503.4px;font-size:11.5px;font-weight:700;color:#111;transform:scaleX(0.957);transform-origin:100% 0;">No</span>
<span class="t" style="left:580.0px;top:532.3px;font-size:12px;color:#1e1e1e;">External</span>
<span class="m" style="left:836.3px;top:532.9px;font-size:11.5px;font-weight:700;color:#111;transform:scaleX(0.957);transform-origin:100% 0;">Inactive</span>
<span class="t" style="left:580.0px;top:550.2px;font-size:12px;color:#1e1e1e;">Degradation</span>
<span class="m" style="left:850.1px;top:550.8px;font-size:11.5px;font-weight:700;color:#111;transform:scaleX(0.957);transform-origin:100% 0;">Active</span>
<span class="t" style="left:580.0px;top:568.1px;font-size:12px;color:#1e1e1e;">Coolant temperature</span>
<span class="m" style="left:836.3px;top:568.6px;font-size:11.5px;font-weight:700;color:#111;transform:scaleX(0.957);transform-origin:100% 0;">Inactive</span>
<span class="t" style="left:580.0px;top:586.0px;font-size:12px;color:#1e1e1e;">Air mass flow</span>
<span class="m" style="left:843.2px;top:586.6px;font-size:11.5px;font-weight:700;color:#111;transform:scaleX(0.957);transform-origin:100% 0;">Pending</span>
<span class="t" style="left:580.0px;top:603.9px;font-size:12px;color:#1e1e1e;">Exhaust temperature</span>
<span class="m" style="left:836.3px;top:604.5px;font-size:11.5px;font-weight:700;color:#111;transform:scaleX(0.957);transform-origin:100% 0;">Inactive</span>
<span class="t" style="left:580.0px;top:621.8px;font-size:12px;color:#1e1e1e;">Fuel temperature</span>
<span class="m" style="left:836.3px;top:622.4px;font-size:11.5px;font-weight:700;color:#111;transform:scaleX(0.957);transform-origin:100% 0;">Inactive</span>
<span class="t" style="left:580.0px;top:639.7px;font-size:12px;color:#1e1e1e;">DEF tank level</span>
<span class="m" style="left:850.1px;top:640.2px;font-size:11.5px;font-weight:700;color:#111;transform:scaleX(0.957);transform-origin:100% 0;">Active</span>
<span class="t" style="left:580.0px;top:657.6px;font-size:12px;color:#1e1e1e;">Emissions</span>
<span class="m" style="left:843.2px;top:658.1px;font-size:11.5px;font-weight:700;color:#111;transform:scaleX(0.957);transform-origin:100% 0;">Pending</span>
<span class="t" style="left:580.0px;top:675.5px;font-size:12px;color:#1e1e1e;">Ambient pressure or temperature</span>
<span class="m" style="left:843.2px;top:676.1px;font-size:11.5px;font-weight:700;color:#111;transform:scaleX(0.957);transform-origin:100% 0;">Pending</span>
<span class="t" style="left:580.0px;top:693.4px;font-size:12px;color:#1e1e1e;">Max fuel curve</span>
<span class="m" style="left:850.1px;top:694.0px;font-size:11.5px;font-weight:700;color:#111;transform:scaleX(0.957);transform-origin:100% 0;">Active</span>
<span class="t" style="left:580.0px;top:711.3px;font-size:12px;color:#1e1e1e;">Oil temperature</span>
<span class="m" style="left:850.1px;top:711.9px;font-size:11.5px;font-weight:700;color:#111;transform:scaleX(0.957);transform-origin:100% 0;">Active</span>
<span class="t" style="left:580.0px;top:729.2px;font-size:12px;color:#1e1e1e;">Manipulation protection</span>
<span class="m" style="left:836.3px;top:729.8px;font-size:11.5px;font-weight:700;color:#111;transform:scaleX(0.957);transform-origin:100% 0;">Inactive</span>
<span class="t" style="left:580.0px;top:747.1px;font-size:12px;color:#1e1e1e;">ECU temperature</span>
<span class="m" style="left:836.3px;top:747.6px;font-size:11.5px;font-weight:700;color:#111;transform:scaleX(0.957);transform-origin:100% 0;">Inactive</span>
<span class="t" style="left:917.7px;top:171.3px;font-size:12px;color:#1e1e1e;">0</span>
<span class="t" style="left:957.6px;top:171.3px;font-size:12px;color:#1e1e1e;">185</span>
<span class="t" style="left:1004.2px;top:171.3px;font-size:12px;color:#1e1e1e;">370</span>
<span class="t" style="left:1050.7px;top:171.3px;font-size:12px;color:#1e1e1e;">555</span>
<span class="t" style="left:1097.3px;top:171.3px;font-size:12px;color:#1e1e1e;">740</span>
<span class="t" style="left:1143.9px;top:171.3px;font-size:12px;color:#1e1e1e;">925</span>
<span class="t" style="left:1188.1px;top:171.3px;font-size:12px;color:#1e1e1e;">1110</span>
<span class="t" style="left:1233.8px;top:171.3px;font-size:12px;color:#1e1e1e;">1295</span>
<span class="t" style="left:1280.3px;top:171.3px;font-size:12px;color:#1e1e1e;">1480</span>
<span class="t" style="left:1323.2px;top:171.3px;font-size:12px;color:#1e1e1e;">1650</span>
<span class="t" style="left:968.4px;top:194.8px;font-size:12px;color:#1e1e1e;">Setpoint</span>
<span class="m" style="left:1004.6px;top:214.0px;font-size:11.5px;font-weight:700;color:#111;transform:scaleX(0.957);transform-origin:100% 0;">Nm</span>
<span class="m" style="left:981.1px;top:214.0px;font-size:11.5px;font-weight:700;color:#111;transform:scaleX(0.957);transform-origin:100% 0;">N/A</span>
<span class="t" style="left:1037.2px;top:194.8px;font-size:12px;color:#1e1e1e;">Actual</span>
<span class="m" style="left:1068.6px;top:214.0px;font-size:11.5px;font-weight:700;color:#111;transform:scaleX(0.957);transform-origin:100% 0;">Nm</span>
<span class="m" style="left:1031.3px;top:214.0px;font-size:11.5px;font-weight:700;color:#111;transform:scaleX(0.957);transform-origin:100% 0;">346.6</span>
<span class="t" style="left:1106.5px;top:194.8px;font-size:12px;color:#1e1e1e;">Max</span>
<span class="m" style="left:1132.6px;top:214.0px;font-size:11.5px;font-weight:700;color:#111;transform:scaleX(0.957);transform-origin:100% 0;">Nm</span>
<span class="m" style="left:1109.1px;top:214.0px;font-size:11.5px;font-weight:700;color:#111;transform:scaleX(0.957);transform-origin:100% 0;">430</span>
<span class="t" style="left:1154.4px;top:194.8px;font-size:12px;color:#1e1e1e;">Unlimited max</span>
<span class="m" style="left:1207.2px;top:214.0px;font-size:11.5px;font-weight:700;color:#111;transform:scaleX(0.957);transform-origin:100% 0;">Nm</span>
<span class="m" style="left:1183.7px;top:214.0px;font-size:11.5px;font-weight:700;color:#111;transform:scaleX(0.957);transform-origin:100% 0;">860</span>
<span class="t" style="left:1238.8px;top:194.8px;font-size:12px;color:#1e1e1e;">Reference</span>
<span class="m" style="left:1280.7px;top:214.0px;font-size:11.5px;font-weight:700;color:#111;transform:scaleX(0.957);transform-origin:100% 0;">Nm</span>
<span class="m" style="left:1250.3px;top:214.0px;font-size:11.5px;font-weight:700;color:#111;transform:scaleX(0.957);transform-origin:100% 0;">1450</span>
<span class="t" style="left:914.3px;top:340.2px;font-size:12px;color:#1e1e1e;">0</span>
<span class="t" style="left:958.9px;top:340.2px;font-size:12px;color:#1e1e1e;">25</span>
<span class="t" style="left:1006.9px;top:340.2px;font-size:12px;color:#1e1e1e;">50</span>
<span class="t" style="left:1054.9px;top:340.2px;font-size:12px;color:#1e1e1e;">75</span>
<span class="t" style="left:1099.5px;top:340.2px;font-size:12px;color:#1e1e1e;">100</span>
<span class="t" style="left:1147.5px;top:340.2px;font-size:12px;color:#1e1e1e;">125</span>
<span class="t" style="left:1195.5px;top:340.2px;font-size:12px;color:#1e1e1e;">150</span>
<span class="t" style="left:1243.4px;top:340.2px;font-size:12px;color:#1e1e1e;">175</span>
<span class="t" style="left:1291.4px;top:340.2px;font-size:12px;color:#1e1e1e;">200</span>
<span class="t" style="left:1329.8px;top:340.2px;font-size:12px;color:#1e1e1e;">220</span>
<span class="t" style="left:1075.0px;top:363.3px;font-size:12px;color:#1e1e1e;">Setpoint</span>
<span class="m" style="left:1104.9px;top:382.9px;font-size:11.5px;font-weight:700;color:#111;transform:scaleX(0.957);transform-origin:100% 0;">MPa</span>
<span class="m" style="left:1074.8px;top:382.9px;font-size:11.5px;font-weight:700;color:#111;transform:scaleX(0.957);transform-origin:100% 0;">85.4</span>
<span class="t" style="left:1143.7px;top:363.3px;font-size:12px;color:#1e1e1e;">Actual</span>
<span class="m" style="left:1167.6px;top:382.9px;font-size:11.5px;font-weight:700;color:#111;transform:scaleX(0.957);transform-origin:100% 0;">MPa</span>
<span class="m" style="left:1137.5px;top:382.9px;font-size:11.5px;font-weight:700;color:#111;transform:scaleX(0.957);transform-origin:100% 0;">85.3</span>
<span class="t" style="left:914.3px;top:508.9px;font-size:12px;color:#1e1e1e;">0</span>
<span class="t" style="left:953.1px;top:508.9px;font-size:12px;color:#1e1e1e;">10</span>
<span class="t" style="left:995.4px;top:508.9px;font-size:12px;color:#1e1e1e;">20</span>
<span class="t" style="left:1058.7px;top:508.9px;font-size:12px;color:#1e1e1e;">35</span>
<span class="t" style="left:1100.9px;top:508.9px;font-size:12px;color:#1e1e1e;">45</span>
<span class="t" style="left:1143.1px;top:508.9px;font-size:12px;color:#1e1e1e;">55</span>
<span class="t" style="left:1206.5px;top:508.9px;font-size:12px;color:#1e1e1e;">70</span>
<span class="t" style="left:1248.7px;top:508.9px;font-size:12px;color:#1e1e1e;">80</span>
<span class="t" style="left:1290.9px;top:508.9px;font-size:12px;color:#1e1e1e;">90</span>
<span class="t" style="left:1329.8px;top:508.9px;font-size:12px;color:#1e1e1e;">100</span>
<span class="t" style="left:1111.7px;top:532.3px;font-size:12px;color:#1e1e1e;">Actual</span>
<span class="m" style="left:1138.2px;top:551.6px;font-size:11.5px;font-weight:700;color:#111;transform:scaleX(0.957);transform-origin:100% 0;">%</span>
<span class="m" style="left:1121.3px;top:551.6px;font-size:11.5px;font-weight:700;color:#111;transform:scaleX(0.957);transform-origin:100% 0;">81</span>
<span class="t" style="left:914.3px;top:673.2px;font-size:12px;color:#1e1e1e;">0</span>
<span class="t" style="left:960.2px;top:673.2px;font-size:12px;color:#1e1e1e;">35</span>
<span class="t" style="left:1009.4px;top:673.2px;font-size:12px;color:#1e1e1e;">70</span>
<span class="t" style="left:1055.4px;top:673.2px;font-size:12px;color:#1e1e1e;">105</span>
<span class="t" style="left:1104.6px;top:673.2px;font-size:12px;color:#1e1e1e;">140</span>
<span class="t" style="left:1153.9px;top:673.2px;font-size:12px;color:#1e1e1e;">175</span>
<span class="t" style="left:1203.1px;top:673.2px;font-size:12px;color:#1e1e1e;">210</span>
<span class="t" style="left:1252.4px;top:673.2px;font-size:12px;color:#1e1e1e;">245</span>
<span class="t" style="left:1301.6px;top:673.2px;font-size:12px;color:#1e1e1e;">280</span>
<span class="t" style="left:1329.8px;top:673.2px;font-size:12px;color:#1e1e1e;">300</span>
<span class="t" style="left:1111.4px;top:696.7px;font-size:12px;color:#1e1e1e;">Post 1</span>
<span class="m" style="left:1139.3px;top:716.0px;font-size:11.5px;font-weight:700;color:#111;transform:scaleX(0.957);transform-origin:100% 0;">mg</span>
<span class="m" style="left:1129.6px;top:716.0px;font-size:11.5px;font-weight:700;color:#111;transform:scaleX(0.957);transform-origin:100% 0;">0</span>
<span class="t" style="left:1016.2px;top:740.8px;font-size:12px;color:#1e1e1e;">Total</span>
<span class="m" style="left:1040.1px;top:759.8px;font-size:11.5px;font-weight:700;color:#111;transform:scaleX(0.957);transform-origin:100% 0;">mg</span>
<span class="m" style="left:1009.7px;top:759.8px;font-size:11.5px;font-weight:700;color:#111;transform:scaleX(0.957);transform-origin:100% 0;">46.5</span>
<span class="t" style="left:1068.0px;top:740.8px;font-size:12px;color:#1e1e1e;">Torque</span>
<span class="m" style="left:1097.4px;top:759.8px;font-size:11.5px;font-weight:700;color:#111;transform:scaleX(0.957);transform-origin:100% 0;">mg</span>
<span class="m" style="left:1067.0px;top:759.8px;font-size:11.5px;font-weight:700;color:#111;transform:scaleX(0.957);transform-origin:100% 0;">46.5</span>
<span class="t" style="left:1132.1px;top:740.8px;font-size:12px;color:#1e1e1e;">Max</span>
<span class="m" style="left:1154.3px;top:759.8px;font-size:11.5px;font-weight:700;color:#111;transform:scaleX(0.957);transform-origin:100% 0;">mg</span>
<span class="m" style="left:1117.0px;top:759.8px;font-size:11.5px;font-weight:700;color:#111;transform:scaleX(0.957);transform-origin:100% 0;">121.9</span>
<span class="t" style="left:1176.3px;top:740.8px;font-size:12px;color:#1e1e1e;">Unlimited max</span>
<span class="m" style="left:1225.7px;top:759.8px;font-size:11.5px;font-weight:700;color:#111;transform:scaleX(0.957);transform-origin:100% 0;">mg</span>
<span class="m" style="left:1202.2px;top:759.8px;font-size:11.5px;font-weight:700;color:#111;transform:scaleX(0.957);transform-origin:100% 0;">122</span>
<span class="m" style="left:1373.4px;top:125.2px;font-size:12px;font-weight:700;color:#ffffff;transform:scaleX(0.917);transform-origin:50% 0;-webkit-text-stroke:0.3px currentColor;">1</span>
<span class="m" style="left:1373.4px;top:158.5px;font-size:12px;font-weight:700;color:#ffffff;transform:scaleX(0.917);transform-origin:50% 0;-webkit-text-stroke:0.3px currentColor;">2</span>
<span class="m" style="left:1373.4px;top:191.8px;font-size:12px;font-weight:700;color:#ffffff;transform:scaleX(0.917);transform-origin:50% 0;-webkit-text-stroke:0.3px currentColor;">3</span>
<span class="m" style="left:1373.4px;top:225.2px;font-size:12px;font-weight:700;color:#ffffff;transform:scaleX(0.917);transform-origin:50% 0;-webkit-text-stroke:0.3px currentColor;">4</span>
<span class="m" style="left:1373.4px;top:258.5px;font-size:12px;font-weight:700;color:#136a0c;transform:scaleX(0.917);transform-origin:50% 0;-webkit-text-stroke:0.3px currentColor;">5</span>
<span class="m" style="left:1373.4px;top:291.8px;font-size:12px;font-weight:700;color:#136a0c;transform:scaleX(0.917);transform-origin:50% 0;-webkit-text-stroke:0.3px currentColor;">6</span>
<span class="m" style="left:1373.4px;top:325.1px;font-size:12px;font-weight:700;color:#136a0c;transform:scaleX(0.917);transform-origin:50% 0;-webkit-text-stroke:0.3px currentColor;">7</span>
<span class="m" style="left:1373.4px;top:358.4px;font-size:12px;font-weight:700;color:#136a0c;transform:scaleX(0.917);transform-origin:50% 0;-webkit-text-stroke:0.3px currentColor;">8</span>
<span class="m" style="left:1373.4px;top:391.8px;font-size:12px;font-weight:700;color:#ffffff;transform:scaleX(0.917);transform-origin:50% 0;-webkit-text-stroke:0.3px currentColor;">9</span>
<span class="m" style="left:1369.8px;top:425.1px;font-size:12px;font-weight:700;color:#ffffff;transform:scaleX(0.917);transform-origin:50% 0;-webkit-text-stroke:0.3px currentColor;">10</span>
<span class="m" style="left:1369.8px;top:458.4px;font-size:12px;font-weight:700;color:#ffffff;transform:scaleX(0.917);transform-origin:50% 0;-webkit-text-stroke:0.3px currentColor;">11</span>
<span class="m" style="left:1369.8px;top:491.7px;font-size:12px;font-weight:700;color:#136a0c;transform:scaleX(0.917);transform-origin:50% 0;-webkit-text-stroke:0.3px currentColor;">12</span>
<span class="m" style="left:1369.8px;top:525.0px;font-size:12px;font-weight:700;color:#136a0c;transform:scaleX(0.917);transform-origin:50% 0;-webkit-text-stroke:0.3px currentColor;">13</span>
<span class="m" style="left:1369.8px;top:558.4px;font-size:12px;font-weight:700;color:#ffffff;transform:scaleX(0.917);transform-origin:50% 0;-webkit-text-stroke:0.3px currentColor;">14</span>
<span class="m" style="left:1369.8px;top:591.7px;font-size:12px;font-weight:700;color:#ffffff;transform:scaleX(0.917);transform-origin:50% 0;-webkit-text-stroke:0.3px currentColor;">15</span>
<span class="m" style="left:1369.8px;top:625.0px;font-size:12px;font-weight:700;color:#ffffff;transform:scaleX(0.917);transform-origin:50% 0;-webkit-text-stroke:0.3px currentColor;">16</span>
<span class="m" style="left:1369.8px;top:658.3px;font-size:12px;font-weight:700;color:#ffffff;transform:scaleX(0.917);transform-origin:50% 0;-webkit-text-stroke:0.3px currentColor;">17</span>
<span class="m" style="left:1369.8px;top:691.6px;font-size:12px;font-weight:700;color:#ffffff;transform:scaleX(0.917);transform-origin:50% 0;-webkit-text-stroke:0.3px currentColor;">18</span>
<span class="m" style="left:1369.8px;top:725.0px;font-size:12px;font-weight:700;color:#ffffff;transform:scaleX(0.917);transform-origin:50% 0;-webkit-text-stroke:0.3px currentColor;">19</span>
<span class="m" style="left:1369.8px;top:758.3px;font-size:12px;font-weight:700;color:#ffffff;transform:scaleX(0.917);transform-origin:50% 0;-webkit-text-stroke:0.3px currentColor;">20</span>
<span class="m" style="left:1411.7px;top:125.2px;font-size:12px;font-weight:700;color:#ffffff;transform:scaleX(0.917);transform-origin:50% 0;-webkit-text-stroke:0.3px currentColor;">1</span>
<span class="m" style="left:1411.7px;top:158.5px;font-size:12px;font-weight:700;color:#ffffff;transform:scaleX(0.917);transform-origin:50% 0;-webkit-text-stroke:0.3px currentColor;">2</span>
<span class="m" style="left:1411.7px;top:191.8px;font-size:12px;font-weight:700;color:#136a0c;transform:scaleX(0.917);transform-origin:50% 0;-webkit-text-stroke:0.3px currentColor;">3</span>
<span class="m" style="left:1411.7px;top:225.2px;font-size:12px;font-weight:700;color:#136a0c;transform:scaleX(0.917);transform-origin:50% 0;-webkit-text-stroke:0.3px currentColor;">4</span>
<span class="m" style="left:1411.7px;top:258.5px;font-size:12px;font-weight:700;color:#ffffff;transform:scaleX(0.917);transform-origin:50% 0;-webkit-text-stroke:0.3px currentColor;">5</span>
<span class="m" style="left:1411.7px;top:291.8px;font-size:12px;font-weight:700;color:#ffffff;transform:scaleX(0.917);transform-origin:50% 0;-webkit-text-stroke:0.3px currentColor;">6</span>
<span class="m" style="left:1411.7px;top:325.1px;font-size:12px;font-weight:700;color:#ffffff;transform:scaleX(0.917);transform-origin:50% 0;-webkit-text-stroke:0.3px currentColor;">7</span>
<span class="m" style="left:1411.7px;top:358.4px;font-size:12px;font-weight:700;color:#ffffff;transform:scaleX(0.917);transform-origin:50% 0;-webkit-text-stroke:0.3px currentColor;">8</span>
<span class="m" style="left:1411.7px;top:391.8px;font-size:12px;font-weight:700;color:#ffffff;transform:scaleX(0.917);transform-origin:50% 0;-webkit-text-stroke:0.3px currentColor;">9</span>
<span class="m" style="left:1408.1px;top:425.1px;font-size:12px;font-weight:700;color:#ffffff;transform:scaleX(0.917);transform-origin:50% 0;-webkit-text-stroke:0.3px currentColor;">10</span>
<span class="m" style="left:1408.1px;top:458.4px;font-size:12px;font-weight:700;color:#ffffff;transform:scaleX(0.917);transform-origin:50% 0;-webkit-text-stroke:0.3px currentColor;">11</span>
<span class="m" style="left:1408.1px;top:491.7px;font-size:12px;font-weight:700;color:#136a0c;transform:scaleX(0.917);transform-origin:50% 0;-webkit-text-stroke:0.3px currentColor;">12</span>
<span class="m" style="left:1408.1px;top:525.0px;font-size:12px;font-weight:700;color:#136a0c;transform:scaleX(0.917);transform-origin:50% 0;-webkit-text-stroke:0.3px currentColor;">13</span>
<span class="m" style="left:1408.1px;top:558.4px;font-size:12px;font-weight:700;color:#ffffff;transform:scaleX(0.917);transform-origin:50% 0;-webkit-text-stroke:0.3px currentColor;">14</span>
<span class="m" style="left:1408.1px;top:591.7px;font-size:12px;font-weight:700;color:#ffffff;transform:scaleX(0.917);transform-origin:50% 0;-webkit-text-stroke:0.3px currentColor;">15</span>
<span class="m" style="left:1408.1px;top:625.0px;font-size:12px;font-weight:700;color:#ffffff;transform:scaleX(0.917);transform-origin:50% 0;-webkit-text-stroke:0.3px currentColor;">16</span>
<span class="m" style="left:1408.1px;top:658.3px;font-size:12px;font-weight:700;color:#ffffff;transform:scaleX(0.917);transform-origin:50% 0;-webkit-text-stroke:0.3px currentColor;">17</span>
<span class="m" style="left:1408.1px;top:691.6px;font-size:12px;font-weight:700;color:#ffffff;transform:scaleX(0.917);transform-origin:50% 0;-webkit-text-stroke:0.3px currentColor;">18</span>
<span class="m" style="left:1408.1px;top:725.0px;font-size:12px;font-weight:700;color:#ffffff;transform:scaleX(0.917);transform-origin:50% 0;-webkit-text-stroke:0.3px currentColor;">19</span>
<span class="m" style="left:1408.1px;top:758.3px;font-size:12px;font-weight:700;color:#ffffff;transform:scaleX(0.917);transform-origin:50% 0;-webkit-text-stroke:0.3px currentColor;">20</span>
<span class="t" style="left:709.5px;top:275.5px;font-size:18px;font-weight:700;color:#55576b;transform:scaleX(0.970);transform-origin:50% 0;">rpm</span>
<span class="t" style="left:815.8px;top:293.6px;font-size:32px;color:#585a6c;transform:scaleX(1.039);transform-origin:100% 0;">700</span>
<span class="t" style="left:838.3px;top:327.0px;font-size:18.5px;color:#585a6c;transform:scaleX(1.037);transform-origin:100% 0;">700</span>
<span class="t" style="left:69.9px;top:809.7px;font-size:10px;font-weight:700;color:#111;transform:scaleX(0.993);transform-origin:0 0;">H501 - EEM5</span>
<span class="t" style="left:143.5px;top:809.7px;font-size:10px;font-weight:700;color:#111;transform:scaleX(0.989);transform-origin:0 0;">16.0.0</span>
<span class="t" style="left:184.6px;top:809.7px;font-size:10px;font-weight:700;color:#111;transform:scaleX(0.963);transform-origin:0 0;">h501_16.0.0_a.hex</span>
<span class="t" style="left:414.9px;top:809.7px;font-size:10px;font-weight:700;color:#111;transform:scaleX(0.979);transform-origin:0 0;">Active faults: 14</span>
<span class="t" style="left:612.9px;top:809.7px;font-size:10px;font-weight:700;color:#111;">Running - Normal</span>
<span class="t" style="left:1388.5px;top:807.5px;font-size:13px;color:#f4f4f4;transform:scaleX(0.876);transform-origin:50% 0;">21%</span>
</body></html>
